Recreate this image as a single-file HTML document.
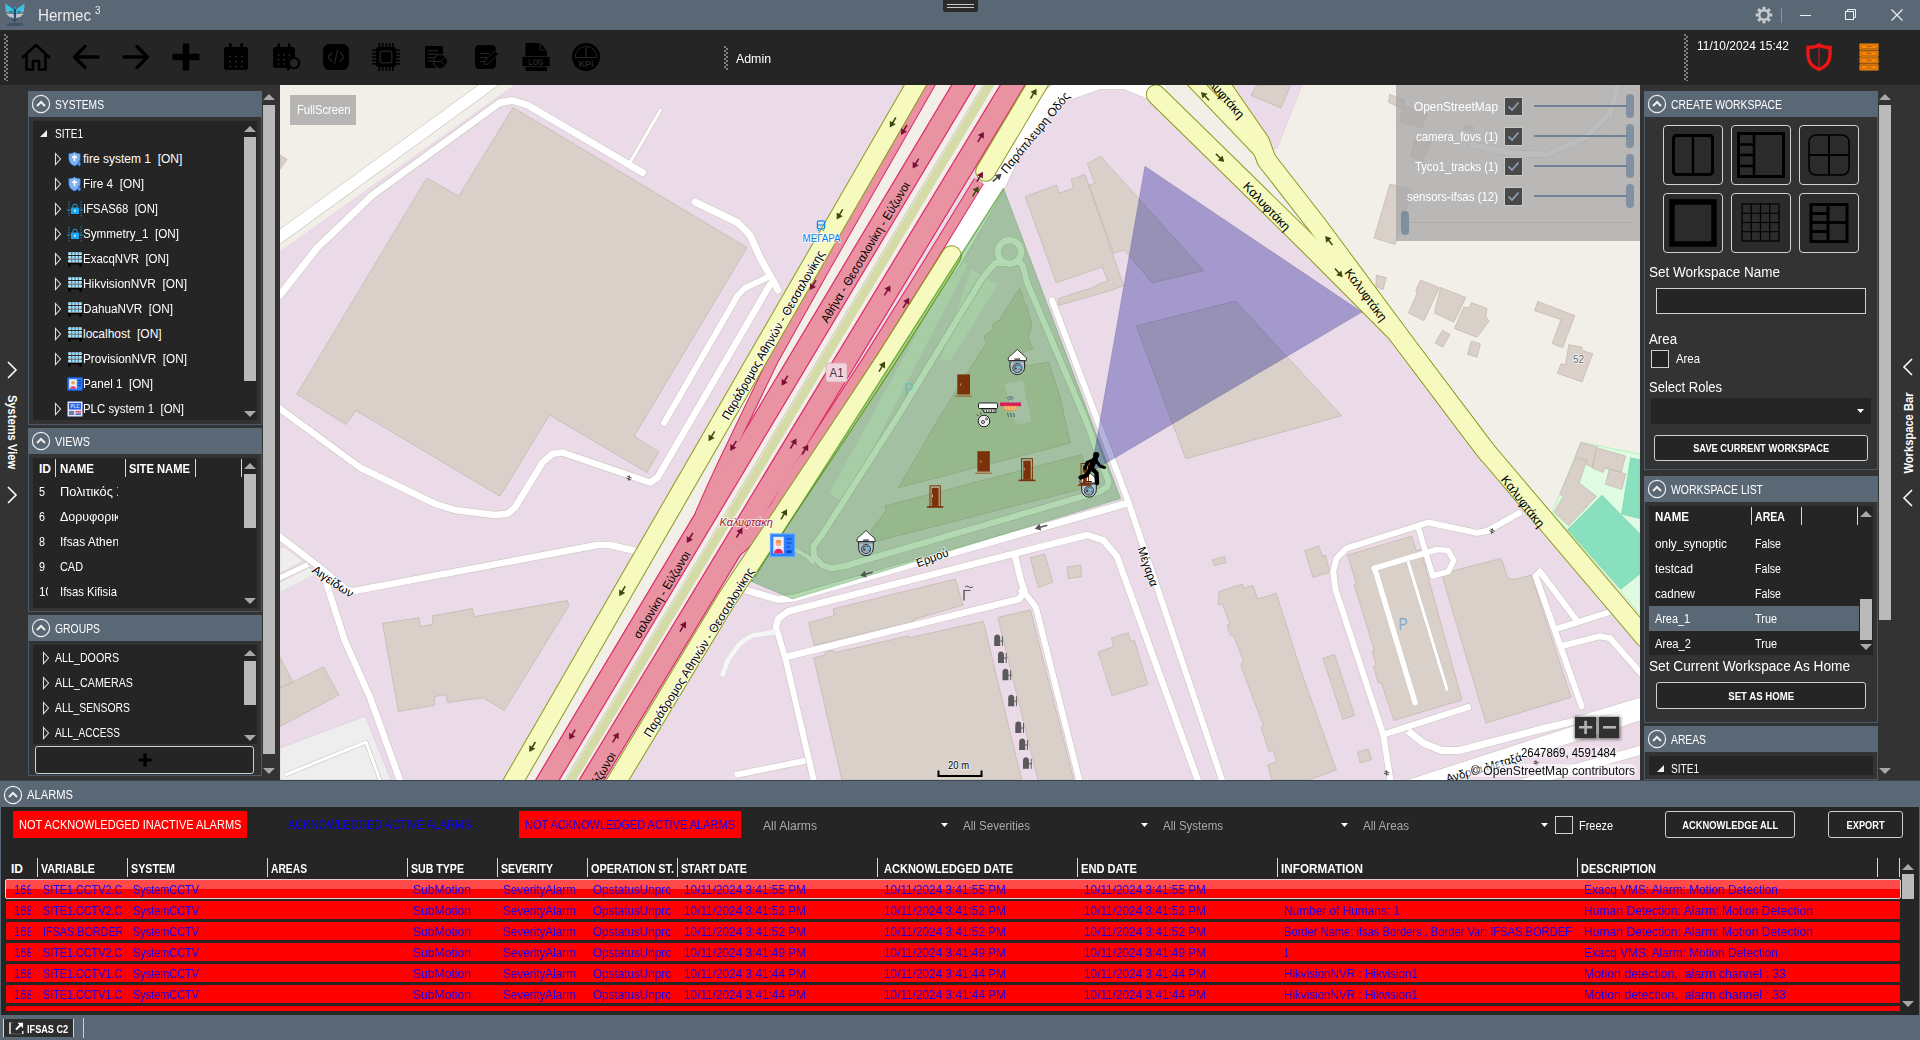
<!DOCTYPE html>
<html><head><meta charset="utf-8"><title>Hermec</title>
<style>
html,body{margin:0;padding:0;background:#333;}
body{width:1920px;height:1040px;position:relative;overflow:hidden;font-family:"Liberation Sans",sans-serif;}
.b{position:absolute;display:block;}
.t{position:absolute;white-space:pre;transform-origin:0 50%;display:block;}
svg{overflow:visible;}
svg.map{position:absolute;left:280px;top:85px;overflow:hidden;}
</style></head><body>
<div class="b" style="left:0px;top:0px;width:1920px;height:30px;background:#5a6775;"></div>
<svg class="b" style="left:3px;top:1px" width="24" height="27" viewBox="0 0 24 27"><defs><filter id="lb" x="-20%" y="-20%" width="140%" height="140%"><feGaussianBlur stdDeviation="0.45"/></filter></defs><g filter="url(#lb)"><path d="M2.200,2.500 L10,8 L11.200,12.500 L8,12 L3.500,9.500 Z" fill="#35c4e6"/><path d="M21.500,2.500 L13.800,8 L12.600,12.500 L16,12 L20.300,9.500 Z" fill="#35c4e6"/><path d="M2,3 L4,9.500 L8,12 L3,11 Z M21.800,3 L19.800,9.500 L16,12 L20.800,11 Z" fill="#9ec3d4" opacity="0.700"/><path d="M3,12.500 L10.500,13 L11,17 L6.500,16 Z M20.800,12.500 L13.300,13 L12.800,17 L17.300,16 Z" fill="#e2e8ee" opacity="0.750"/><path d="M11.200,4.500 L12.600,4.500 L13,12 L12.400,20.500 L11.400,20.500 L10.800,12 Z" fill="#2b4a62"/><path d="M11.300,5 L12.500,5 L12.300,8 L11.500,8 Z" fill="#3cc8e8"/><path d="M7.500,17 L11.500,21.500 L16.300,17 L12,19.300 Z" fill="#33485c" opacity="0.900"/><path d="M6.500,10.800 L9.500,11 M17.300,10.800 L14.300,11" stroke="#13405a" stroke-width="1"/></g><text x="12" y="25.200" font-size="4.200" text-anchor="middle" fill="#274660" font-family="Liberation Sans,sans-serif" font-weight="bold" textLength="16" lengthAdjust="spacingAndGlyphs">HERMES</text></svg>
<span class="t" style="left:38.0px;top:5.5px;font-size:16px;line-height:20px;color:#ececec;transform:scaleX(0.9463);">Hermec</span>
<span class="t" style="left:94.5px;top:4.0px;font-size:10px;line-height:14px;color:#ececec;transform:scaleX(0.9888);">3</span>
<div class="b" style="left:943px;top:0px;width:35px;height:12px;background:#2b2b2b;border-radius:0 0 2px 2px;"></div>
<div class="b" style="left:947px;top:4px;width:27px;height:1px;background:#c8c8c8;"></div>
<div class="b" style="left:947px;top:7px;width:27px;height:1px;background:#c8c8c8;"></div>
<svg class="b" style="left:1754px;top:5px" width="20" height="20" viewBox="-10 -10 20 20"><g fill="#c6cace"><rect x="-1.500" y="-8.300" width="3" height="16.600" transform="rotate(0)"/><rect x="-1.500" y="-8.300" width="3" height="16.600" transform="rotate(45)"/><rect x="-1.500" y="-8.300" width="3" height="16.600" transform="rotate(90)"/><rect x="-1.500" y="-8.300" width="3" height="16.600" transform="rotate(135)"/><circle r="5.900"/></g><circle r="3.500" fill="#5a6775"/></svg>
<div class="b" style="left:1781px;top:8px;width:1px;height:15px;background:#8a95a1;"></div>
<div class="b" style="left:1800px;top:15px;width:11px;height:1px;background:#eee;"></div>
<svg class="b" style="left:1845px;top:9px" width="12" height="12"><rect x="0.5" y="2.5" width="8" height="8" fill="none" stroke="#eee"/><polyline points="2.5,2.5 2.5,0.5 10.5,0.5 10.5,8.5 8.5,8.5" fill="none" stroke="#eee"/></svg>
<svg class="b" style="left:1891px;top:9px" width="12" height="12"><path d="M0.5,0.5 L11.5,11.5 M11.5,0.5 L0.5,11.5" stroke="#eee" stroke-width="1.2"/></svg>
<div class="b" style="left:0px;top:30px;width:1920px;height:55px;background:#252525;"></div>
<div class="b" style="left:4px;top:34px;width:4px;height:47px;background-image:radial-gradient(circle at 1px 1px,#808080 0.700px,transparent 0.950px),radial-gradient(circle at 3px 3px,#808080 0.700px,transparent 0.950px);background-size:4px 4px;"></div>
<div class="b" style="left:723.5px;top:46px;width:4px;height:24px;background-image:radial-gradient(circle at 1px 1px,#808080 0.700px,transparent 0.950px),radial-gradient(circle at 3px 3px,#808080 0.700px,transparent 0.950px);background-size:4px 4px;"></div>
<div class="b" style="left:1684px;top:34px;width:4px;height:47px;background-image:radial-gradient(circle at 1px 1px,#808080 0.700px,transparent 0.950px),radial-gradient(circle at 3px 3px,#808080 0.700px,transparent 0.950px);background-size:4px 4px;"></div>
<span class="t" style="left:736.0px;top:49.5px;font-size:13px;line-height:17px;color:#fff;transform:scaleX(0.9499);">Admin</span>
<span class="t" style="left:1697.0px;top:37.0px;font-size:13px;line-height:17px;color:#fff;transform:scaleX(0.9177);">11/10/2024 15:42</span>
<svg class="b" style="left:21px;top:42px" width="30" height="30" viewBox="0 0 30 30"><path d="M2,15 L15,3 L28,15 M5.5,13 V27.5 H12 V19 H18 V27.5 H24.5 V13" fill="none" stroke="#000" stroke-width="2.6" stroke-linejoin="round" stroke-linecap="round"/></svg>
<svg class="b" style="left:71px;top:42px" width="30" height="30" viewBox="0 0 30 30"><path d="M27,15 H4 M14,4.5 L3.5,15 L14,25.5" fill="none" stroke="#000" stroke-width="3.4" stroke-linecap="round" stroke-linejoin="round"/></svg>
<svg class="b" style="left:121px;top:42px" width="30" height="30" viewBox="0 0 30 30"><path d="M3,15 H26 M16,4.5 L26.5,15 L16,25.5" fill="none" stroke="#000" stroke-width="3.4" stroke-linecap="round" stroke-linejoin="round"/></svg>
<svg class="b" style="left:171px;top:42px" width="30" height="30" viewBox="0 0 30 30"><path d="M15,1.5 V28.5 M1.5,15 H28.5" stroke="#000" stroke-width="6.5"/></svg>
<svg class="b" style="left:222px;top:42px" width="28" height="30" viewBox="0 0 28 30"><rect x="2" y="5" width="24" height="23" rx="2.5" fill="#000"/><rect x="7" y="1" width="2.6" height="7" rx="1.3" fill="#000"/><rect x="18.4" y="1" width="2.6" height="7" rx="1.3" fill="#000"/><circle cx="8" cy="14.5" r="1.1" fill="#252525"/><circle cx="8" cy="19.5" r="1.1" fill="#252525"/><circle cx="8" cy="24.5" r="1.1" fill="#252525"/><circle cx="14" cy="14.5" r="1.1" fill="#252525"/><circle cx="14" cy="19.5" r="1.1" fill="#252525"/><circle cx="14" cy="24.5" r="1.1" fill="#252525"/><circle cx="20" cy="14.5" r="1.1" fill="#252525"/><circle cx="20" cy="19.5" r="1.1" fill="#252525"/><circle cx="20" cy="24.5" r="1.1" fill="#252525"/></svg>
<svg class="b" style="left:272px;top:42px" width="30" height="30" viewBox="0 0 30 30"><rect x="1" y="5" width="22" height="21" rx="2.5" fill="#000"/><rect x="5.5" y="1" width="2.4" height="7" rx="1.2" fill="#000"/><rect x="16" y="1" width="2.4" height="7" rx="1.2" fill="#000"/><circle cx="6.5" cy="13" r="1" fill="#252525"/><circle cx="6.5" cy="17.5" r="1" fill="#252525"/><circle cx="6.5" cy="22" r="1" fill="#252525"/><circle cx="12" cy="13" r="1" fill="#252525"/><circle cx="12" cy="17.5" r="1" fill="#252525"/><circle cx="12" cy="22" r="1" fill="#252525"/><circle cx="17.5" cy="13" r="1" fill="#252525"/><circle cx="17.5" cy="17.5" r="1" fill="#252525"/><circle cx="17.5" cy="22" r="1" fill="#252525"/><circle cx="22" cy="21" r="5.2" fill="#252525" stroke="#000" stroke-width="2"/><path d="M18,25 L15.5,28" stroke="#000" stroke-width="2.4"/></svg>
<svg class="b" style="left:323px;top:44px" width="26" height="26" viewBox="0 0 26 26"><rect width="26" height="26" rx="6.5" fill="#000"/><path d="M9,8.5 L5,13 L9,17.5 M17,8.5 L21,13 L17,17.5 M14.5,6 L11.5,20" fill="none" stroke="#252525" stroke-width="1.2"/></svg>
<svg class="b" style="left:372px;top:43px" width="28" height="28" viewBox="0 0 28 28"><rect x="6.5" y="0" width="1.6" height="28" fill="#000"/><rect x="0" y="6.5" width="28" height="1.6" fill="#000"/><rect x="9.9" y="0" width="1.6" height="28" fill="#000"/><rect x="0" y="9.9" width="28" height="1.6" fill="#000"/><rect x="13.3" y="0" width="1.6" height="28" fill="#000"/><rect x="0" y="13.3" width="28" height="1.6" fill="#000"/><rect x="16.7" y="0" width="1.6" height="28" fill="#000"/><rect x="0" y="16.7" width="28" height="1.6" fill="#000"/><rect x="20.1" y="0" width="1.6" height="28" fill="#000"/><rect x="0" y="20.1" width="28" height="1.6" fill="#000"/><rect x="4" y="4" width="20" height="20" rx="2.500" fill="#000"/><rect x="8.200" y="8.200" width="11.600" height="11.600" rx="1.500" fill="none" stroke="#252525" stroke-width="1.300"/></svg>
<svg class="b" style="left:424.5px;top:45.5px" width="23" height="23" viewBox="0 0 23 23"><rect x="0" y="0" width="18" height="22" rx="1.5" fill="#000"/><rect x="3" y="4" width="10" height="1.2" fill="#252525"/><rect x="3" y="7.5" width="10" height="1.2" fill="#252525"/><rect x="3" y="11" width="10" height="1.2" fill="#252525"/><rect x="3" y="14.5" width="10" height="1.2" fill="#252525"/><circle cx="15.5" cy="15.5" r="7" fill="#000" stroke="#252525" stroke-width="1.2"/><path d="M15.5,15.5 L21,11 M15.5,15.5 L21,20 M15.5,15.5 H8.5" stroke="#252525" stroke-width="1"/></svg>
<svg class="b" style="left:475px;top:45px" width="24" height="24" viewBox="0 0 24 24"><rect x="0" y="0" width="21" height="24" rx="4.5" fill="#000"/><rect x="5" y="8" width="9" height="1.1" fill="#252525"/><rect x="5" y="12" width="7.5" height="1.1" fill="#252525"/><rect x="5" y="16" width="6" height="1.1" fill="#252525"/><path d="M9,19.5 L10,15.5 L20,5.5 L23.5,9 L13.5,19 Z" fill="#000" stroke="#252525" stroke-width="1"/></svg>
<svg class="b" style="left:522px;top:43px" width="28" height="28" viewBox="0 0 28 28"><path d="M3.5,0 H18 L25,7 V28 H3.5 Z" fill="#000"/><path d="M18,0 V7 H25" fill="none" stroke="#252525" stroke-width="1"/><rect x="0" y="13.5" width="28" height="10" fill="#000" stroke="#252525" stroke-width="0.8"/><text x="14" y="22" font-family="Liberation Sans,sans-serif" font-weight="bold" font-size="8.5" text-anchor="middle" fill="#252525" textLength="15" lengthAdjust="spacingAndGlyphs">LOG</text></svg>
<svg class="b" style="left:572px;top:43px" width="28" height="28" viewBox="0 0 28 28"><circle cx="14" cy="14" r="14" fill="#000"/><path d="M3,14.5 A11,11 0 0 1 25,14.5 Z" fill="none" stroke="#252525" stroke-width="1"/><path d="M14,5 V14" stroke="#252525" stroke-width="1.3"/><text x="14" y="24.3" font-family="Liberation Sans,sans-serif" font-weight="bold" font-size="8.5" text-anchor="middle" fill="#252525" textLength="15" lengthAdjust="spacingAndGlyphs">KPI</text></svg>
<svg class="b" style="left:1806px;top:43px" width="26" height="28" viewBox="0 0 26 28"><path d="M13,2 C9,4.5 5,4.5 2,4.5 V12 C2,19.5 7,24 13,26.5 C19,24 24,19.5 24,12 V4.5 C21,4.5 17,4.5 13,2 Z" fill="none" stroke="#f01414" stroke-width="3.400"/><path d="M13,3 V25" stroke="#f01414" stroke-width="1"/></svg>
<svg class="b" style="left:1859px;top:43px" width="20" height="28" viewBox="0 0 20 28"><rect x="0.500" y="0.5" width="19" height="6.300" rx="0.800" fill="#ff8c0a"/><rect x="2" y="2" width="16" height="3.300" fill="none" stroke="#b35a00" stroke-width="0.800"/><rect x="7.500" y="3.1" width="5" height="1" fill="#b35a00"/><rect x="0.500" y="7.4" width="19" height="6.300" rx="0.800" fill="#ff8c0a"/><rect x="2" y="8.9" width="16" height="3.300" fill="none" stroke="#b35a00" stroke-width="0.800"/><rect x="7.500" y="10" width="5" height="1" fill="#b35a00"/><rect x="0.500" y="14.3" width="19" height="6.300" rx="0.800" fill="#ff8c0a"/><rect x="2" y="15.8" width="16" height="3.300" fill="none" stroke="#b35a00" stroke-width="0.800"/><rect x="7.500" y="16.9" width="5" height="1" fill="#b35a00"/><rect x="0.500" y="21.2" width="19" height="6.300" rx="0.800" fill="#ff8c0a"/><rect x="2" y="22.7" width="16" height="3.300" fill="none" stroke="#b35a00" stroke-width="0.800"/><rect x="7.500" y="23.8" width="5" height="1" fill="#b35a00"/></svg>
<div class="b" style="left:0px;top:85px;width:280px;height:695px;background:#333333;"></div>
<div class="b" style="left:1640px;top:85px;width:280px;height:695px;background:#333333;"></div>
<svg class="map" width="1360" height="695" viewBox="280 85 1360 695"><rect x="280" y="85" width="1360" height="695" fill="#ebdbe8"/>
<polygon points="280.0,85.0 514.0,85.0 280.0,251.0" fill="#f2efe9" />
<polygon points="1150.0,85.0 1158.0,100.0 1312.0,234.0 1470.0,430.0 1640.0,632.0 1640.0,85.0" fill="#f2efe9" />
<polygon points="1228.0,85.0 1302.0,85.0 1277.0,148.5 1268.0,150.0" fill="#ebdbe8" stroke="#dccbd9" stroke-width="0.6" />
<polygon points="525.9,780.0 604.6,780.0 1027.0,85.0 927.0,85.0" fill="#f2efe9" />
<polygon points="280.0,748.0 365.4,715.9 391.0,780.0 280.0,780.0" fill="#eeeeee" stroke="#d9c8d6" stroke-width="0.6" />
<polygon points="280.0,547.7 284.6,547.1 302.5,561.0 280.0,573.0" fill="#eeeeee" stroke="#e0cdd8" stroke-width="0.5" />
<polygon points="280.0,582.3 308.8,567.3 315.8,574.2 280.0,592.7" fill="#eeeeee" stroke="#e0cdd8" stroke-width="0.5" />
<polygon points="1552.2,513.0 1581.0,442.2 1640.0,454.3 1640.0,613.6" fill="#dffce2" stroke="#a8efb4" stroke-width="0.8" />
<polygon points="1567.7,529.6 1602.0,495.3 1640.0,534.0 1640.0,573.8 1620.8,589.3" fill="#88e0be" stroke="#7ccfae" stroke-width="0.7" />
<polygon points="1630.8,457.7 1640.0,459.9 1640.0,518.5 1621.5,514.0" fill="#88e0be" stroke="#7ccfae" stroke-width="0.7" />
<polygon points="513.0,107.5 747.0,247.5 634.2,436.2 658.8,452.0 646.8,472.5 549.5,415.0 500.0,496.2 355.8,410.5 346.2,424.5 296.8,394.2 426.8,178.0 458.8,196.2" fill="#d9d0c9" stroke="#c3b5a9" stroke-width="0.7" />
<polygon points="280.0,155.0 287.0,159.5 280.0,169.0" fill="#d9d0c9" stroke="#c3b5a9" stroke-width="0.7" />
<polygon points="382.5,623.4 418.8,617.7 420.3,626.8 433.3,624.1 432.0,616.0 472.2,608.5 474.3,616.6 567.2,600.6 568.7,605.9 504.2,710.5 482.9,697.7 447.6,702.6 446.1,694.5 434.2,696.7 434.8,705.2 398.5,711.6" fill="#d9d0c9" stroke="#c3b5a9" stroke-width="0.7" />
<polygon points="280.0,688.1 323.8,666.8 338.7,695.0 280.0,726.6" fill="#d9d0c9" stroke="#c3b5a9" stroke-width="0.7" />
<polygon points="280.0,657.2 292.8,681.7 280.0,688.0" fill="#d9d0c9" stroke="#c3b5a9" stroke-width="0.7" />
<polygon points="1025.2,196.6 1056.6,185.1 1059.0,193.3 1073.4,188.1 1071.3,179.4 1084.9,174.5 1123.6,285.7 1113.0,289.8 1059.0,305.3 1057.9,298.8 1095.8,286.5 1096.6,284.9 1107.8,280.8 1102.4,266.9 1056.3,282.7" fill="#d9d0c9" stroke="#c3b5a9" stroke-width="0.7" />
<polygon points="1087.2,163.9 1100.4,156.2 1203.7,270.5 1152.2,282.9 1124.4,250.0 1113.8,253.3 1088.8,185.1 1095.0,183.2" fill="#d9d0c9" stroke="#c3b5a9" stroke-width="0.7" />
<polygon points="1136.3,326.1 1235.4,301.1 1341.6,415.7 1185.7,458.8" fill="#d9d0c9" stroke="#c3b5a9" stroke-width="0.7" />
<polygon points="1251.0,95.4 1281.0,108.0 1290.6,85.0 1257.0,85.0" fill="#d9d0c9" stroke="#c3b5a9" stroke-width="0.7" />
<polygon points="1390.0,184.0 1374.0,238.0 1395.0,244.5 1412.0,190.0" fill="#d9d0c9" stroke="#c3b5a9" stroke-width="0.7" />
<polygon points="1376.3,275.3 1386.3,277.5 1383.0,289.7 1375.9,286.4" fill="#d9d0c9" stroke="#c3b5a9" stroke-width="0.7" />
<polygon points="1389.5,94.5 1404.6,100.0 1403.8,106.4 1427.6,113.6 1422.0,127.8 1399.8,121.5 1403.0,108.8 1388.7,102.4" fill="#d9d0c9" stroke="#c3b5a9" stroke-width="0.7" />
<polygon points="1415.7,137.3 1430.8,142.1 1422.8,161.1 1410.1,156.4" fill="#d9d0c9" stroke="#c3b5a9" stroke-width="0.7" />
<polygon points="1465.7,124.7 1473.6,127.0 1472.0,131.0 1464.0,129.4" fill="#d9d0c9" stroke="#c3b5a9" stroke-width="0.7" />
<polygon points="1420.6,280.2 1439.4,287.5 1423.9,320.7 1408.4,312.9 1417.3,293.0 1415.7,290.4" fill="#d9d0c9" stroke="#c3b5a9" stroke-width="0.7" />
<polygon points="1440.5,287.5 1465.9,297.4 1453.8,322.2 1434.3,312.9" fill="#d9d0c9" stroke="#c3b5a9" stroke-width="0.7" />
<polygon points="1471.5,302.5 1487.0,308.5 1485.8,317.3 1489.2,320.7 1477.0,337.3 1454.4,328.4 1463.7,307.4 1469.2,307.4" fill="#d9d0c9" stroke="#c3b5a9" stroke-width="0.7" />
<polygon points="1442.7,330.2 1450.0,334.6 1442.7,347.2 1435.0,342.8" fill="#d9d0c9" stroke="#c3b5a9" stroke-width="0.7" />
<polygon points="1471.5,341.0 1480.3,343.9 1477.0,357.2 1467.5,354.3" fill="#d9d0c9" stroke="#c3b5a9" stroke-width="0.7" />
<polygon points="1537.8,301.4 1574.8,315.6 1562.6,347.7 1552.2,343.5 1561.0,319.6 1534.5,310.7" fill="#d9d0c9" stroke="#c3b5a9" stroke-width="0.7" />
<polygon points="1568.8,344.6 1582.0,347.2 1582.0,350.5 1592.7,353.8 1582.0,381.9 1557.3,373.3 1561.0,363.8 1565.5,364.9" fill="#d9d0c9" stroke="#c3b5a9" stroke-width="0.7" />
<polygon points="1581.0,442.2 1597.6,447.3 1592.0,467.2 1584.3,463.2 1586.5,459.9 1575.4,456.5" fill="#d9d0c9" stroke="#c3b5a9" stroke-width="0.7" />
<polygon points="1596.5,447.7 1625.7,456.1 1621.2,472.0 1604.9,468.1 1603.1,472.5 1592.5,468.1" fill="#d9d0c9" stroke="#c3b5a9" stroke-width="0.7" />
<polygon points="1609.3,469.4 1625.7,473.8 1621.9,489.3 1605.3,484.2" fill="#d9d0c9" stroke="#c3b5a9" stroke-width="0.7" />
<polygon points="1575.4,457.7 1586.5,461.0 1579.2,483.1 1596.5,496.4 1568.8,525.6 1554.0,512.3 1563.3,496.4 1560.0,494.2 1565.5,480.9" fill="#d9d0c9" stroke="#c3b5a9" stroke-width="0.7" />
<polygon points="1347.6,555.0 1411.7,536.2 1416.2,550.6 1420.6,549.5 1462.0,700.0 1393.9,720.4 1381.5,683.2 1378.0,682.3 1373.5,666.4 1376.1,665.5 1372.3,651.4 1374.4,650.5 1354.2,584.9 1356.4,583.8" fill="#d9d0c9" stroke="#c3b5a9" stroke-width="0.7" />
<polygon points="1441.6,573.8 1501.3,558.3 1508.0,578.7 1515.7,579.3 1531.2,574.9 1571.0,697.4 1486.0,723.0" fill="#d9d0c9" stroke="#c3b5a9" stroke-width="0.7" />
<polygon points="1304.9,550.6 1318.9,545.8 1322.1,556.0 1325.6,555.2 1329.6,572.2 1313.0,577.5" fill="#d9d0c9" stroke="#c3b5a9" stroke-width="0.7" />
<polygon points="1322.9,658.3 1334.5,654.3 1354.7,715.4 1343.1,719.4" fill="#d9d0c9" stroke="#c3b5a9" stroke-width="0.7" />
<polygon points="1300.0,668.0 1336.3,770.0 1308.9,780.0 1283.0,780.0 1271.7,780.0 1267.7,765.2 1277.1,761.2 1273.1,750.4 1269.0,751.7 1261.0,727.5 1263.7,726.2 1244.8,676.4 1240.8,664.2 1243.5,661.6 1234.0,636.0 1230.0,634.6 1227.3,625.2 1230.0,623.9 1222.0,603.7 1217.9,605.0 1219.2,591.5 1242.1,584.0 1243.5,588.3 1252.9,585.6 1257.5,599.1 1276.3,593.4" fill="#d9d0c9" stroke="#c3b5a9" stroke-width="0.7" />
<polygon points="1357.6,752.3 1368.2,749.1 1371.7,759.4 1360.2,762.9" fill="#d9d0c9" stroke="#c3b5a9" stroke-width="0.7" />
<polygon points="1212.5,559.8 1224.6,556.5 1226.0,562.5 1213.9,565.4" fill="#d9d0c9" stroke="#c3b5a9" stroke-width="0.7" />
<polygon points="1030.2,557.9 1044.8,553.9 1052.8,582.1 1038.3,587.5" fill="#d9d0c9" stroke="#c3b5a9" stroke-width="0.7" />
<polygon points="1067.1,566.8 1080.6,565.2 1081.4,576.7 1068.5,578.6" fill="#d9d0c9" stroke="#c3b5a9" stroke-width="0.7" />
<polygon points="1098.1,652.1 1113.4,646.7 1111.5,637.9 1128.2,632.7 1130.4,641.4 1134.4,640.5 1147.9,684.4 1112.1,695.7" fill="#d9d0c9" stroke="#c3b5a9" stroke-width="0.7" />
<polygon points="808.7,622.7 834.2,615.6 833.3,608.8 955.4,579.0 963.0,605.0 914.0,619.4 914.0,621.3 814.0,645.4" fill="#d9d0c9" stroke="#c3b5a9" stroke-width="0.7" />
<polygon points="813.7,657.9 824.6,655.0 825.6,652.1 833.3,650.2 834.2,652.7 908.8,635.8 909.2,637.7 983.3,621.3 1021.7,780.0 842.0,780.0" fill="#d9d0c9" stroke="#c3b5a9" stroke-width="0.7" />
<polygon points="997.7,617.5 1030.4,609.8 1073.7,780.0 1038.0,780.0" fill="#d9d0c9" stroke="#c3b5a9" stroke-width="0.7" />
<polygon points="1020.0,288.5 1025.4,304.9 1027.6,305.8 1028.7,314.0 1031.8,325.0 1028.2,337.8 1032.7,348.8 1022.7,352.4 1025.4,366.1 1048.5,362.1 1060.0,396.7 1070.2,443.0 898.4,487.7 937.7,420.0 986.1,343.3 984.3,336.0 993.5,329.6 992.5,325.0 996.2,321.4 999.9,320.5 1001.7,315.9" fill="#d9d0c9" stroke="#c3b5a9" stroke-width="0.7" />
<polygon points="884.7,506.0 1081.2,454.8 1083.0,458.0 1085.7,487.7 874.7,541.6 871.0,530.0 886.5,510.6" fill="#d9d0c9" stroke="#c3b5a9" stroke-width="0.7" />
<polygon points="958.0,258.0 968.0,264.0 844.4,503.6 829.3,493.5" fill="#eeeeee" />
<polygon points="1004.3,384.1 1022.8,380.8 1031.2,421.2 1016.1,424.5" fill="#ebdbe8" />
<polygon points="970.6,269.3 998.0,284.8 949.6,361.6 941.4,357.9" fill="#eeeeee" />
<polyline points="495.5,80.0 270.0,244.0" fill="none" stroke="#cfcac6" stroke-width="12.9" stroke-linecap="butt" stroke-linejoin="round" />
<polyline points="280.0,295.0 317.5,247.5 372.5,195.0 500.0,102.5 512.5,100.5 527.5,105.0 642.5,172.5" fill="none" stroke="#cfcac6" stroke-width="8.4" stroke-linecap="round" stroke-linejoin="round" />
<polyline points="630.0,162.5 660.5,110.0" fill="none" stroke="#cfcac6" stroke-width="4.4" stroke-linecap="round" stroke-linejoin="round" />
<polyline points="695.0,202.0 737.5,222.5 750.0,235.0 760.0,257.5 778.0,290.0" fill="none" stroke="#cfcac6" stroke-width="8.4" stroke-linecap="round" stroke-linejoin="round" />
<polyline points="766.0,278.0 745.0,288.0 738.0,295.0 664.0,423.0" fill="none" stroke="#cfcac6" stroke-width="7.4" stroke-linecap="round" stroke-linejoin="round" />
<polyline points="771.0,283.0 657.5,477.5 650.0,482.5 562.5,452.5 552.5,453.8 542.5,462.5 515.0,507.5 507.5,513.8 495.0,515.0 455.0,510.0 435.0,503.8 360.0,467.5 275.0,405.0" fill="none" stroke="#cfcac6" stroke-width="7.9" stroke-linecap="butt" stroke-linejoin="round" />
<polyline points="640.0,552.0 610.0,545.0 597.5,545.0 352.5,591.2 347.0,590.0 318.0,566.0 275.0,533.0" fill="none" stroke="#cfcac6" stroke-width="7.9" stroke-linecap="butt" stroke-linejoin="round" />
<polyline points="324.0,576.0 344.6,640.0 369.7,696.7 402.0,786.0" fill="none" stroke="#cfcac6" stroke-width="7.9" stroke-linecap="butt" stroke-linejoin="round" />
<polyline points="275.0,580.0 308.0,564.5" fill="none" stroke="#cfcac6" stroke-width="6.4" stroke-linecap="butt" stroke-linejoin="round" />
<polyline points="285.0,775.0 366.0,742.0 380.0,780.0" fill="none" stroke="#cfcac6" stroke-width="4.4" stroke-linecap="butt" stroke-linejoin="round" />
<polyline points="1052.0,300.4 1127.7,500.0 1222.0,780.0 1226.0,790.0" fill="none" stroke="#cfcac6" stroke-width="7.4" stroke-linecap="round" stroke-linejoin="round" />
<polyline points="1003.0,263.0 995.0,263.0 981.6,279.3 895.7,420.0 822.0,535.0 813.5,546.0 814.0,556.3 822.0,565.0 831.0,568.3 845.0,566.0 1100.2,491.3 1107.0,487.0 1108.6,481.7 1085.7,420.0 1027.3,283.0 1022.5,264.7 1017.0,261.0" fill="none" stroke="#cfcac6" stroke-width="7.4" stroke-linecap="round" stroke-linejoin="round" />
<circle cx="1009.5" cy="252" r="11.700" fill="none" stroke="#cfcac6" stroke-width="7.600"/>
<polyline points="790.0,547.0 806.9,556.3 814.1,563.0" fill="none" stroke="#cfcac6" stroke-width="5.4" stroke-linecap="butt" stroke-linejoin="round" />
<polyline points="745.6,590.0 778.0,599.5 792.5,598.3 1126.6,503.4" fill="none" stroke="#cfcac6" stroke-width="8.4" stroke-linecap="butt" stroke-linejoin="round" />
<polyline points="775.7,628.4 778.0,618.8 787.7,611.5 1087.3,535.0 1103.5,540.4 1117.0,556.5 1197.7,780.0 1201.0,790.0" fill="none" stroke="#cfcac6" stroke-width="7.9" stroke-linecap="butt" stroke-linejoin="round" />
<polyline points="775.7,626.0 786.0,660.8 816.0,790.0" fill="none" stroke="#cfcac6" stroke-width="7.4" stroke-linecap="butt" stroke-linejoin="round" />
<polyline points="786.0,657.0 1018.8,599.2 1024.6,591.5 1020.8,580.0 1014.8,555.0" fill="none" stroke="#cfcac6" stroke-width="7.9" stroke-linecap="butt" stroke-linejoin="round" />
<polyline points="1020.0,588.9 1028.0,597.0 1036.0,607.7 1079.2,780.0 1082.0,790.0" fill="none" stroke="#cfcac6" stroke-width="7.4" stroke-linecap="butt" stroke-linejoin="round" />
<polyline points="735.0,775.0 805.4,760.8" fill="none" stroke="#cfcac6" stroke-width="7.4" stroke-linecap="butt" stroke-linejoin="round" />
<polyline points="774.6,632.0 751.5,635.8 740.0,643.5 728.0,660.0 722.7,674.4" fill="none" stroke="#ddd" stroke-width="6" stroke-linecap="round" stroke-linejoin="round" />
<polyline points="1521.2,511.9 1488.0,530.7 1477.0,532.9 1428.3,522.5 1346.5,548.4 1336.5,558.3 1333.2,571.6 1335.4,589.3 1383.2,734.6 1392.0,790.0" fill="none" stroke="#cfcac6" stroke-width="7.4" stroke-linecap="butt" stroke-linejoin="round" />
<polyline points="1418.4,528.0 1432.7,576.0 1448.2,571.6 1453.8,560.5 1448.2,550.6 1437.2,549.5 1374.1,568.3 1376.3,573.8 1415.1,702.7" fill="none" stroke="#cfcac6" stroke-width="6.9" stroke-linecap="round" stroke-linejoin="round" />
<polyline points="1408.4,562.7 1447.0,689.4" fill="none" stroke="#cfcac6" stroke-width="4.4" stroke-linecap="round" stroke-linejoin="round" />
<polyline points="1383.2,734.6 1468.2,707.1" fill="none" stroke="#cfcac6" stroke-width="7.4" stroke-linecap="round" stroke-linejoin="round" />
<polyline points="1408.0,731.0 1424.0,743.4 1441.7,750.5 1459.4,750.5 1547.9,727.5 1571.0,722.2 1645.0,700.0" fill="none" stroke="#cfcac6" stroke-width="8.4" stroke-linecap="butt" stroke-linejoin="round" />
<polyline points="1540.0,571.6 1535.6,576.0 1581.6,706.3" fill="none" stroke="#cfcac6" stroke-width="7.4" stroke-linecap="round" stroke-linejoin="round" />
<polyline points="1540.0,571.6 1576.5,620.3" fill="none" stroke="#cfcac6" stroke-width="7.4" stroke-linecap="round" stroke-linejoin="round" />
<polyline points="1555.9,629.2 1610.0,612.0" fill="none" stroke="#cfcac6" stroke-width="7.4" stroke-linecap="butt" stroke-linejoin="round" />
<polyline points="1562.0,646.0 1599.3,636.3 1609.9,638.1 1645.0,678.0" fill="none" stroke="#cfcac6" stroke-width="7.4" stroke-linecap="butt" stroke-linejoin="round" />
<polyline points="1395.0,792.0 1645.0,711.0" fill="none" stroke="#cfcac6" stroke-width="16.4" stroke-linecap="butt" stroke-linejoin="round" />
<polyline points="1521.0,784.0 1645.0,749.0" fill="none" stroke="#cfcac6" stroke-width="10.4" stroke-linecap="butt" stroke-linejoin="round" />
<polyline points="1472.0,145.0 1510.0,153.0 1546.7,154.8 1586.0,137.0 1610.0,113.6 1620.0,80.0" fill="none" stroke="#cfcac6" stroke-width="7.4" stroke-linecap="round" stroke-linejoin="round" />
<polyline points="1608.5,113.6 1645.0,190.0" fill="none" stroke="#cfcac6" stroke-width="3.4" stroke-linecap="butt" stroke-linejoin="round" />
<polyline points="945.5,268.0 950.5,259.5 993.8,185.0 1016.2,138.8 1037.0,112.0 1062.2,90.8 1097.4,78.3 1126.0,78.0 1152.4,88.7 1160.0,95.0" fill="none" stroke="#cfcac6" stroke-width="23.4" stroke-linecap="butt" stroke-linejoin="round" />
<polyline points="495.5,80.0 270.0,244.0" fill="none" stroke="#ffffff" stroke-width="11.5" stroke-linecap="butt" stroke-linejoin="round" />
<polyline points="280.0,295.0 317.5,247.5 372.5,195.0 500.0,102.5 512.5,100.5 527.5,105.0 642.5,172.5" fill="none" stroke="#ffffff" stroke-width="7" stroke-linecap="round" stroke-linejoin="round" />
<polyline points="630.0,162.5 660.5,110.0" fill="none" stroke="#ffffff" stroke-width="3" stroke-linecap="round" stroke-linejoin="round" />
<polyline points="695.0,202.0 737.5,222.5 750.0,235.0 760.0,257.5 778.0,290.0" fill="none" stroke="#ffffff" stroke-width="7" stroke-linecap="round" stroke-linejoin="round" />
<polyline points="766.0,278.0 745.0,288.0 738.0,295.0 664.0,423.0" fill="none" stroke="#ffffff" stroke-width="6" stroke-linecap="round" stroke-linejoin="round" />
<polyline points="771.0,283.0 657.5,477.5 650.0,482.5 562.5,452.5 552.5,453.8 542.5,462.5 515.0,507.5 507.5,513.8 495.0,515.0 455.0,510.0 435.0,503.8 360.0,467.5 275.0,405.0" fill="none" stroke="#ffffff" stroke-width="6.5" stroke-linecap="butt" stroke-linejoin="round" />
<polyline points="640.0,552.0 610.0,545.0 597.5,545.0 352.5,591.2 347.0,590.0 318.0,566.0 275.0,533.0" fill="none" stroke="#ffffff" stroke-width="6.5" stroke-linecap="butt" stroke-linejoin="round" />
<polyline points="324.0,576.0 344.6,640.0 369.7,696.7 402.0,786.0" fill="none" stroke="#ffffff" stroke-width="6.5" stroke-linecap="butt" stroke-linejoin="round" />
<polyline points="275.0,580.0 308.0,564.5" fill="none" stroke="#ffffff" stroke-width="5" stroke-linecap="butt" stroke-linejoin="round" />
<polyline points="285.0,775.0 366.0,742.0 380.0,780.0" fill="none" stroke="#ffffff" stroke-width="3" stroke-linecap="butt" stroke-linejoin="round" />
<polyline points="1052.0,300.4 1127.7,500.0 1222.0,780.0 1226.0,790.0" fill="none" stroke="#ffffff" stroke-width="6" stroke-linecap="round" stroke-linejoin="round" />
<polyline points="1003.0,263.0 995.0,263.0 981.6,279.3 895.7,420.0 822.0,535.0 813.5,546.0 814.0,556.3 822.0,565.0 831.0,568.3 845.0,566.0 1100.2,491.3 1107.0,487.0 1108.6,481.7 1085.7,420.0 1027.3,283.0 1022.5,264.7 1017.0,261.0" fill="none" stroke="#ffffff" stroke-width="6" stroke-linecap="round" stroke-linejoin="round" />
<circle cx="1009.5" cy="252" r="11.700" fill="none" stroke="#fff" stroke-width="6.400"/>
<polyline points="790.0,547.0 806.9,556.3 814.1,563.0" fill="none" stroke="#ffffff" stroke-width="4" stroke-linecap="butt" stroke-linejoin="round" />
<polyline points="745.6,590.0 778.0,599.5 792.5,598.3 1126.6,503.4" fill="none" stroke="#ffffff" stroke-width="7" stroke-linecap="butt" stroke-linejoin="round" />
<polyline points="775.7,628.4 778.0,618.8 787.7,611.5 1087.3,535.0 1103.5,540.4 1117.0,556.5 1197.7,780.0 1201.0,790.0" fill="none" stroke="#ffffff" stroke-width="6.5" stroke-linecap="butt" stroke-linejoin="round" />
<polyline points="775.7,626.0 786.0,660.8 816.0,790.0" fill="none" stroke="#ffffff" stroke-width="6" stroke-linecap="butt" stroke-linejoin="round" />
<polyline points="786.0,657.0 1018.8,599.2 1024.6,591.5 1020.8,580.0 1014.8,555.0" fill="none" stroke="#ffffff" stroke-width="6.5" stroke-linecap="butt" stroke-linejoin="round" />
<polyline points="1020.0,588.9 1028.0,597.0 1036.0,607.7 1079.2,780.0 1082.0,790.0" fill="none" stroke="#ffffff" stroke-width="6" stroke-linecap="butt" stroke-linejoin="round" />
<polyline points="735.0,775.0 805.4,760.8" fill="none" stroke="#ffffff" stroke-width="6" stroke-linecap="butt" stroke-linejoin="round" />
<polyline points="774.6,632.0 751.5,635.8 740.0,643.5 728.0,660.0 722.7,674.4" fill="none" stroke="#f6f6f6" stroke-width="4.6" stroke-linecap="round" stroke-linejoin="round" />
<polyline points="1521.2,511.9 1488.0,530.7 1477.0,532.9 1428.3,522.5 1346.5,548.4 1336.5,558.3 1333.2,571.6 1335.4,589.3 1383.2,734.6 1392.0,790.0" fill="none" stroke="#ffffff" stroke-width="6" stroke-linecap="butt" stroke-linejoin="round" />
<polyline points="1418.4,528.0 1432.7,576.0 1448.2,571.6 1453.8,560.5 1448.2,550.6 1437.2,549.5 1374.1,568.3 1376.3,573.8 1415.1,702.7" fill="none" stroke="#ffffff" stroke-width="5.5" stroke-linecap="round" stroke-linejoin="round" />
<polyline points="1408.4,562.7 1447.0,689.4" fill="none" stroke="#ffffff" stroke-width="3" stroke-linecap="round" stroke-linejoin="round" />
<polyline points="1383.2,734.6 1468.2,707.1" fill="none" stroke="#ffffff" stroke-width="6" stroke-linecap="round" stroke-linejoin="round" />
<polyline points="1408.0,731.0 1424.0,743.4 1441.7,750.5 1459.4,750.5 1547.9,727.5 1571.0,722.2 1645.0,700.0" fill="none" stroke="#ffffff" stroke-width="7" stroke-linecap="butt" stroke-linejoin="round" />
<polyline points="1540.0,571.6 1535.6,576.0 1581.6,706.3" fill="none" stroke="#ffffff" stroke-width="6" stroke-linecap="round" stroke-linejoin="round" />
<polyline points="1540.0,571.6 1576.5,620.3" fill="none" stroke="#ffffff" stroke-width="6" stroke-linecap="round" stroke-linejoin="round" />
<polyline points="1555.9,629.2 1610.0,612.0" fill="none" stroke="#ffffff" stroke-width="6" stroke-linecap="butt" stroke-linejoin="round" />
<polyline points="1562.0,646.0 1599.3,636.3 1609.9,638.1 1645.0,678.0" fill="none" stroke="#ffffff" stroke-width="6" stroke-linecap="butt" stroke-linejoin="round" />
<polyline points="1395.0,792.0 1645.0,711.0" fill="none" stroke="#ffffff" stroke-width="15" stroke-linecap="butt" stroke-linejoin="round" />
<polyline points="1521.0,784.0 1645.0,749.0" fill="none" stroke="#ffffff" stroke-width="9" stroke-linecap="butt" stroke-linejoin="round" />
<polyline points="1472.0,145.0 1510.0,153.0 1546.7,154.8 1586.0,137.0 1610.0,113.6 1620.0,80.0" fill="none" stroke="#ffffff" stroke-width="6" stroke-linecap="round" stroke-linejoin="round" />
<polyline points="1608.5,113.6 1645.0,190.0" fill="none" stroke="#ffffff" stroke-width="2" stroke-linecap="butt" stroke-linejoin="round" />
<polyline points="945.5,268.0 950.5,259.5 993.8,185.0 1016.2,138.8 1037.0,112.0 1062.2,90.8 1097.4,78.3 1126.0,78.0 1152.4,88.7 1160.0,95.0" fill="none" stroke="#ffffff" stroke-width="22" stroke-linecap="butt" stroke-linejoin="round" />
<polyline points="559.2,800.0 1004.6,60.0" fill="none" stroke="#d5dba6" stroke-width="8.5" stroke-linecap="butt" stroke-linejoin="round" />
<polyline points="552.9,800.0 998.3,60.0" fill="none" stroke="#b9b6ad" stroke-width="0.7" stroke-linecap="butt" stroke-linejoin="round" />
<polyline points="932.0,80.0 826.3,265.0 773.1,360.0 724.0,462.0 712.0,488.0 700.0,515.0" fill="none" stroke="#dc2a67" stroke-width="11.5" stroke-linecap="butt" stroke-linejoin="round" />
<polyline points="736.0,552.0 752.0,538.0 775.0,507.0 790.0,480.0 868.0,360.0 927.5,265.0 979.0,181.0" fill="none" stroke="#dc2a67" stroke-width="11.5" stroke-linecap="butt" stroke-linejoin="round" />
<polyline points="535.5,800.0 978.5,60.0" fill="none" stroke="#dc2a67" stroke-width="21.5" stroke-linecap="butt" stroke-linejoin="round" />
<polyline points="579.5,800.0 1027.9,60.0" fill="none" stroke="#dc2a67" stroke-width="22.5" stroke-linecap="butt" stroke-linejoin="round" />
<polyline points="932.0,80.0 826.3,265.0 773.1,360.0 724.0,462.0 712.0,488.0 700.0,515.0" fill="none" stroke="#e892a2" stroke-width="9.5" stroke-linecap="butt" stroke-linejoin="round" />
<polyline points="736.0,552.0 752.0,538.0 775.0,507.0 790.0,480.0 868.0,360.0 927.5,265.0 979.0,181.0" fill="none" stroke="#e892a2" stroke-width="9.5" stroke-linecap="butt" stroke-linejoin="round" />
<polyline points="535.5,800.0 978.5,60.0" fill="none" stroke="#e892a2" stroke-width="19.1" stroke-linecap="butt" stroke-linejoin="round" />
<polyline points="579.5,800.0 1027.9,60.0" fill="none" stroke="#e892a2" stroke-width="20.1" stroke-linecap="butt" stroke-linejoin="round" />
<polyline points="502.7,800.0 929.9,60.0" fill="none" stroke="#8b9a1e" stroke-width="20.3" stroke-linecap="butt" stroke-linejoin="round" />
<polyline points="605.5,800.0 617.6,780.0 726.2,600.0 792.8,500.0 839.5,430.0 885.6,360.0 945.7,265.0 951.5,255.5" fill="none" stroke="#8b9a1e" stroke-width="20.5" stroke-linecap="round" stroke-linejoin="round" />
<polyline points="985.5,171.5 1049.0,65.0" fill="none" stroke="#8b9a1e" stroke-width="20.5" stroke-linecap="round" stroke-linejoin="round" />
<polyline points="1155.9,94.5 1307.3,242.9 1396.7,332.9 1470.3,430.0 1485.3,450.0 1645.0,638.0" fill="none" stroke="#8b9a1e" stroke-width="20.3" stroke-linecap="round" stroke-linejoin="round" />
<polyline points="1180.0,67.0 1258.8,149.6 1266.5,160.0" fill="none" stroke="#8b9a1e" stroke-width="15" stroke-linecap="butt" stroke-linejoin="round" />
<polyline points="1207.9,65.8 1225.0,90.4 1259.1,139.6 1266.5,160.0" fill="none" stroke="#8b9a1e" stroke-width="19" stroke-linecap="butt" stroke-linejoin="round" />
<polyline points="1259.1,139.6 1266.5,160.0 1318.0,226.0 1407.0,346.0 1474.5,436.0 1490.0,456.0" fill="none" stroke="#8b9a1e" stroke-width="20.3" stroke-linecap="butt" stroke-linejoin="round" />
<polyline points="502.7,800.0 929.9,60.0" fill="none" stroke="#f7fabf" stroke-width="18.3" stroke-linecap="butt" stroke-linejoin="round" />
<polyline points="605.5,800.0 617.6,780.0 726.2,600.0 792.8,500.0 839.5,430.0 885.6,360.0 945.7,265.0 951.5,255.5" fill="none" stroke="#f7fabf" stroke-width="18.5" stroke-linecap="round" stroke-linejoin="round" />
<polyline points="985.5,171.5 1049.0,65.0" fill="none" stroke="#f7fabf" stroke-width="18.5" stroke-linecap="round" stroke-linejoin="round" />
<polyline points="1155.9,94.5 1307.3,242.9 1396.7,332.9 1470.3,430.0 1485.3,450.0 1645.0,638.0" fill="none" stroke="#f7fabf" stroke-width="18.3" stroke-linecap="round" stroke-linejoin="round" />
<polyline points="1180.0,67.0 1258.8,149.6 1266.5,160.0" fill="none" stroke="#f7fabf" stroke-width="13" stroke-linecap="butt" stroke-linejoin="round" />
<polyline points="1207.9,65.8 1225.0,90.4 1259.1,139.6 1266.5,160.0" fill="none" stroke="#f7fabf" stroke-width="17" stroke-linecap="butt" stroke-linejoin="round" />
<polyline points="1259.1,139.6 1266.5,160.0 1318.0,226.0 1407.0,346.0 1474.5,436.0 1490.0,456.0" fill="none" stroke="#f7fabf" stroke-width="18.3" stroke-linecap="butt" stroke-linejoin="round" /><polygon points="1003.6,188.4 1120.6,498.6 792.5,599.0 751.6,581.5" fill="rgba(0,128,0,0.3)" stroke="rgba(0,110,0,0.25)" stroke-width="0.8" />
<polygon points="1144.9,166.3 1362.0,312.1 1091.0,472.0" fill="rgba(0,0,139,0.3)" stroke="rgba(60,60,120,0.25)" stroke-width="0.8" />
<polyline points="751.6,581.5 1003.6,188.4" fill="none" stroke="rgba(70,150,30,0.600)" stroke-width="1.4" stroke-linecap="butt" stroke-linejoin="round" />
<g transform="translate(892.8,122.5) rotate(121.1) scale(1.300)"><path d="M-4.5,0 H2.5" fill="none" stroke="#3c4a10" stroke-width="1.2"/><path d="M0,-2.700 L4.5,0 L0,2.700 Z" fill="#3c4a10"/></g>
<g transform="translate(839.7,214.4) rotate(121.1) scale(1.300)"><path d="M-4.5,0 H2.5" fill="none" stroke="#3c4a10" stroke-width="1.2"/><path d="M0,-2.700 L4.5,0 L0,2.700 Z" fill="#3c4a10"/></g>
<g transform="translate(711.6,436.3) rotate(121.1) scale(1.300)"><path d="M-4.5,0 H2.5" fill="none" stroke="#3c4a10" stroke-width="1.2"/><path d="M0,-2.700 L4.5,0 L0,2.700 Z" fill="#3c4a10"/></g>
<g transform="translate(622.2,591.2) rotate(121.1) scale(1.300)"><path d="M-4.5,0 H2.5" fill="none" stroke="#3c4a10" stroke-width="1.2"/><path d="M0,-2.700 L4.5,0 L0,2.700 Z" fill="#3c4a10"/></g>
<g transform="translate(532.3,747.0) rotate(121.1) scale(1.300)"><path d="M-4.5,0 H2.5" fill="none" stroke="#3c4a10" stroke-width="1.2"/><path d="M0,-2.700 L4.5,0 L0,2.700 Z" fill="#3c4a10"/></g>
<g transform="translate(904.0,130.0) rotate(121.1) scale(1.300)"><path d="M-4.5,0 H2.5" fill="none" stroke="#7a1038" stroke-width="1.2"/><path d="M0,-2.700 L4.5,0 L0,2.700 Z" fill="#7a1038"/></g>
<g transform="translate(813.0,285.1) rotate(121.1) scale(1.300)"><path d="M-4.5,0 H2.5" fill="none" stroke="#7a1038" stroke-width="1.2"/><path d="M0,-2.700 L4.5,0 L0,2.700 Z" fill="#7a1038"/></g>
<g transform="translate(733.3,445.9) rotate(121.1) scale(1.300)"><path d="M-4.5,0 H2.5" fill="none" stroke="#7a1038" stroke-width="1.2"/><path d="M0,-2.700 L4.5,0 L0,2.700 Z" fill="#7a1038"/></g>
<g transform="translate(915.7,163.6) rotate(121.1) scale(1.300)"><path d="M-4.5,0 H2.5" fill="none" stroke="#7a1038" stroke-width="1.2"/><path d="M0,-2.700 L4.5,0 L0,2.700 Z" fill="#7a1038"/></g>
<g transform="translate(784.7,380.7) rotate(121.1) scale(1.300)"><path d="M-4.5,0 H2.5" fill="none" stroke="#7a1038" stroke-width="1.2"/><path d="M0,-2.700 L4.5,0 L0,2.700 Z" fill="#7a1038"/></g>
<g transform="translate(689.8,538.0) rotate(121.1) scale(1.300)"><path d="M-4.5,0 H2.5" fill="none" stroke="#7a1038" stroke-width="1.2"/><path d="M0,-2.700 L4.5,0 L0,2.700 Z" fill="#7a1038"/></g>
<g transform="translate(572.2,734.6) rotate(121.1) scale(1.300)"><path d="M-4.5,0 H2.5" fill="none" stroke="#7a1038" stroke-width="1.2"/><path d="M0,-2.700 L4.5,0 L0,2.700 Z" fill="#7a1038"/></g>
<g transform="translate(980.8,136.9) rotate(-58.9) scale(1.300)"><path d="M-4.5,0 H2.5" fill="none" stroke="#7a1038" stroke-width="1.2"/><path d="M0,-2.700 L4.5,0 L0,2.700 Z" fill="#7a1038"/></g>
<g transform="translate(887.4,290.4) rotate(-58.9) scale(1.300)"><path d="M-4.5,0 H2.5" fill="none" stroke="#7a1038" stroke-width="1.2"/><path d="M0,-2.700 L4.5,0 L0,2.700 Z" fill="#7a1038"/></g>
<g transform="translate(793.5,443.5) rotate(-58.9) scale(1.300)"><path d="M-4.5,0 H2.5" fill="none" stroke="#7a1038" stroke-width="1.2"/><path d="M0,-2.700 L4.5,0 L0,2.700 Z" fill="#7a1038"/></g>
<g transform="translate(739.4,532.7) rotate(-58.9) scale(1.300)"><path d="M-4.5,0 H2.5" fill="none" stroke="#7a1038" stroke-width="1.2"/><path d="M0,-2.700 L4.5,0 L0,2.700 Z" fill="#7a1038"/></g>
<g transform="translate(683.0,626.6) rotate(-58.9) scale(1.300)"><path d="M-4.5,0 H2.5" fill="none" stroke="#7a1038" stroke-width="1.2"/><path d="M0,-2.700 L4.5,0 L0,2.700 Z" fill="#7a1038"/></g>
<g transform="translate(615.7,737.4) rotate(-58.9) scale(1.300)"><path d="M-4.5,0 H2.5" fill="none" stroke="#7a1038" stroke-width="1.2"/><path d="M0,-2.700 L4.5,0 L0,2.700 Z" fill="#7a1038"/></g>
<g transform="translate(906.2,302.8) rotate(-58.9) scale(1.300)"><path d="M-4.5,0 H2.5" fill="none" stroke="#7a1038" stroke-width="1.2"/><path d="M0,-2.700 L4.5,0 L0,2.700 Z" fill="#7a1038"/></g>
<g transform="translate(805.2,449.5) rotate(-58.9) scale(1.300)"><path d="M-4.5,0 H2.5" fill="none" stroke="#7a1038" stroke-width="1.2"/><path d="M0,-2.700 L4.5,0 L0,2.700 Z" fill="#7a1038"/></g>
<g transform="translate(882.0,366.6) rotate(-58.9) scale(1.300)"><path d="M-4.5,0 H2.5" fill="none" stroke="#3c4a10" stroke-width="1.2"/><path d="M0,-2.700 L4.5,0 L0,2.700 Z" fill="#3c4a10"/></g>
<g transform="translate(784.0,514.3) rotate(-58.9) scale(1.300)"><path d="M-4.5,0 H2.5" fill="none" stroke="#3c4a10" stroke-width="1.2"/><path d="M0,-2.700 L4.5,0 L0,2.700 Z" fill="#3c4a10"/></g>
<g transform="translate(1033.5,93.7) rotate(-58.9) scale(1.300)"><path d="M-4.5,0 H2.5" fill="none" stroke="#3c4a10" stroke-width="1.2"/><path d="M0,-2.700 L4.5,0 L0,2.700 Z" fill="#3c4a10"/></g>
<g transform="translate(975.6,191.4) rotate(-58.9) scale(1.300)"><path d="M-4.5,0 H2.5" fill="none" stroke="#3c4a10" stroke-width="1.2"/><path d="M0,-2.700 L4.5,0 L0,2.700 Z" fill="#3c4a10"/></g>
<g transform="translate(979.9,176.7) rotate(-58.9) scale(1.300)"><path d="M-4.5,0 H2.5" fill="none" stroke="#7a1038" stroke-width="1.2"/><path d="M0,-2.700 L4.5,0 L0,2.700 Z" fill="#7a1038"/></g>
<g transform="translate(997.2,177.6) rotate(-40.9) scale(1.300)"><path d="M-4.5,0 H2.5" fill="none" stroke="#444" stroke-width="1.2"/><path d="M0,-2.700 L4.5,0 L0,2.700 Z" fill="#444"/></g>
<g transform="translate(1205.0,96.1) rotate(-133.8) scale(1.300)"><path d="M-4.5,0 H2.5" fill="none" stroke="#3c4a10" stroke-width="1.2"/><path d="M0,-2.700 L4.5,0 L0,2.700 Z" fill="#3c4a10"/></g>
<g transform="translate(1220.1,158.0) rotate(44.4) scale(1.300)"><path d="M-4.5,0 H2.5" fill="none" stroke="#3c4a10" stroke-width="1.2"/><path d="M0,-2.700 L4.5,0 L0,2.700 Z" fill="#3c4a10"/></g>
<g transform="translate(1328.8,240.5) rotate(-128.4) scale(1.300)"><path d="M-4.5,0 H2.5" fill="none" stroke="#3c4a10" stroke-width="1.2"/><path d="M0,-2.700 L4.5,0 L0,2.700 Z" fill="#3c4a10"/></g>
<g transform="translate(1338.8,272.8) rotate(48.0) scale(1.300)"><path d="M-4.5,0 H2.5" fill="none" stroke="#3c4a10" stroke-width="1.2"/><path d="M0,-2.700 L4.5,0 L0,2.700 Z" fill="#3c4a10"/></g>
<g transform="translate(1041.0,527.0) rotate(165.0) scale(1.300)"><path d="M-5,0 H3" fill="none" stroke="#555" stroke-width="1.2"/><path d="M0.5,-2.700 L5,0 L0.5,2.700 Z" fill="#555"/></g>
<g transform="translate(866.4,574.0) rotate(165.0) scale(1.300)"><path d="M-5,0 H3" fill="none" stroke="#555" stroke-width="1.2"/><path d="M0.5,-2.700 L5,0 L0.5,2.700 Z" fill="#555"/></g>
<text dy="0.35em" transform="translate(773.0,335.0) rotate(-60.0)" font-family="Liberation Sans,sans-serif" font-size="12" text-anchor="middle" textLength="193" lengthAdjust="spacingAndGlyphs" fill="#000" stroke="#fff" stroke-opacity="0.85" stroke-width="1.6" paint-order="stroke" >Παράδρομος Αθηνών - Θεσσαλονίκης</text>
<text dy="0.35em" transform="translate(865.3,252.3) rotate(-59.1)" font-family="Liberation Sans,sans-serif" font-size="12" text-anchor="middle" textLength="161.5" lengthAdjust="spacingAndGlyphs" fill="#000" >Αθήνα - Θεσσαλονίκη - Εύζωνοι</text>
<text dy="0.35em" transform="translate(698.8,652.2) rotate(-58.0)" font-family="Liberation Sans,sans-serif" font-size="12" text-anchor="middle" textLength="197" lengthAdjust="spacingAndGlyphs" fill="#000" stroke="#fff" stroke-opacity="0.85" stroke-width="1.6" paint-order="stroke" >Παράδρομος Αθηνών - Θεσσαλονίκης</text>
<text dy="0.35em" transform="translate(661.6,594.7) rotate(-59.1)" font-family="Liberation Sans,sans-serif" font-size="12" text-anchor="middle" textLength="99.3" lengthAdjust="spacingAndGlyphs" fill="#000" >σαλονίκη - Εύζωνοι</text>
<text dy="0.35em" transform="translate(601.5,772.0) rotate(-59.0)" font-family="Liberation Sans,sans-serif" font-size="12" text-anchor="middle" textLength="44" lengthAdjust="spacingAndGlyphs" fill="#000" >Εύζωνοι</text>
<text dy="0.35em" transform="translate(1035.3,132.6) rotate(-50.6)" font-family="Liberation Sans,sans-serif" font-size="12" text-anchor="middle" textLength="100.7" lengthAdjust="spacingAndGlyphs" fill="#000" stroke="#fff" stroke-opacity="0.85" stroke-width="1.6" paint-order="stroke" >Παράπλευρη Οδός</text>
<text dy="0.35em" transform="translate(1221.9,93.3) rotate(48.9)" font-family="Liberation Sans,sans-serif" font-size="12.5" text-anchor="middle" textLength="62" lengthAdjust="spacingAndGlyphs" fill="#000" >Καλυφτάκη</text>
<text dy="0.35em" transform="translate(1266.9,206.4) rotate(46.1)" font-family="Liberation Sans,sans-serif" font-size="12.5" text-anchor="middle" textLength="62" lengthAdjust="spacingAndGlyphs" fill="#000" >Καλυφτάκη</text>
<text dy="0.35em" transform="translate(1366.0,295.0) rotate(53.4)" font-family="Liberation Sans,sans-serif" font-size="12.5" text-anchor="middle" textLength="62" lengthAdjust="spacingAndGlyphs" fill="#000" >Καλυφτάκη</text>
<text dy="0.35em" transform="translate(1522.9,501.4) rotate(52.0)" font-family="Liberation Sans,sans-serif" font-size="12.5" text-anchor="middle" textLength="62" lengthAdjust="spacingAndGlyphs" fill="#000" >Καλυφτάκη</text>
<text dy="0.35em" transform="translate(1147.9,566.6) rotate(71.0)" font-family="Liberation Sans,sans-serif" font-size="12" text-anchor="middle" textLength="41.3" lengthAdjust="spacingAndGlyphs" fill="#000" stroke="#fff" stroke-opacity="0.85" stroke-width="1.6" paint-order="stroke" >Μέγαρα</text>
<text dy="0.35em" transform="translate(932.2,557.6) rotate(-20.0)" font-family="Liberation Sans,sans-serif" font-size="12" text-anchor="middle" textLength="33.3" lengthAdjust="spacingAndGlyphs" fill="#000" stroke="#fff" stroke-opacity="0.85" stroke-width="1.6" paint-order="stroke" >Ερμού</text>
<text dy="0.35em" transform="translate(333.0,581.4) rotate(34.0)" font-family="Liberation Sans,sans-serif" font-size="12" text-anchor="middle" textLength="47" lengthAdjust="spacingAndGlyphs" fill="#000" stroke="#fff" stroke-opacity="0.85" stroke-width="1.6" paint-order="stroke" >Αιγείδων</text>
<text dy="0.35em" transform="translate(1483.7,767.8) rotate(-16.4)" font-family="Liberation Sans,sans-serif" font-size="12" text-anchor="middle" textLength="78.6" lengthAdjust="spacingAndGlyphs" fill="#000" stroke="#fff" stroke-opacity="0.85" stroke-width="1.6" paint-order="stroke" >Ανδρέα Μεταξά</text>
<text dy="0.35em" transform="translate(746.2,522.0) rotate(0.0)" font-family="Liberation Sans,sans-serif" font-size="11" text-anchor="middle" textLength="53.5" lengthAdjust="spacingAndGlyphs" fill="#9c1c3a" font-style="italic" stroke="#fff" stroke-opacity="0.85" stroke-width="1.6" paint-order="stroke" >Καλυφτάκη</text>
<text dy="0.35em" transform="translate(821.5,238.7) rotate(0.0)" font-family="Liberation Sans,sans-serif" font-size="10" text-anchor="middle" textLength="38" lengthAdjust="spacingAndGlyphs" fill="#0a7bef" stroke="#fff" stroke-opacity="0.85" stroke-width="1.6" paint-order="stroke" >ΜΕΓΑΡΑ</text>
<g transform="translate(821,225.5)"><rect x="-3.6" y="-4.6" width="7.2" height="8" rx="1.3" fill="none" stroke="#0a8fe8" stroke-width="1.3"/><path d="M-3.3,-0.5 H3.3" stroke="#0a8fe8" stroke-width="1"/><path d="M-2.5,4.500 V5.6 M2.500,4.500 V5.6" stroke="#0a8fe8" stroke-width="1.2"/></g>
<rect x="826" y="363" width="21" height="19" rx="2.500" fill="#f1d5dc" stroke="#d9a6b4" stroke-width="0.8"/>
<text dy="0.35em" transform="translate(836.5,372.8) rotate(0.0)" font-family="Liberation Sans,sans-serif" font-size="13" text-anchor="middle" textLength="14" lengthAdjust="spacingAndGlyphs" fill="#4a3038" >A1</text>
<text dy="0.35em" transform="translate(1578.5,359.5) rotate(0.0)" font-family="Liberation Sans,sans-serif" font-size="10.5" text-anchor="middle" textLength="11" lengthAdjust="spacingAndGlyphs" fill="#666" stroke="#fff" stroke-opacity="0.85" stroke-width="1.6" paint-order="stroke" >52</text>
<text dy="0.35em" transform="translate(908.8,389.0) rotate(0.0)" font-family="Liberation Sans,sans-serif" font-size="16" text-anchor="middle" textLength="9" lengthAdjust="spacingAndGlyphs" fill="#6fb9b4" >P</text>
<text dy="0.35em" transform="translate(1403.0,624.2) rotate(0.0)" font-family="Liberation Sans,sans-serif" font-size="16" text-anchor="middle" textLength="9" lengthAdjust="spacingAndGlyphs" fill="#79a9d8" >P</text>
<g transform="translate(1017.3,362.0) scale(1.00)"><path d="M0,-12.500 L-6.500,-6.500 C-8.800,-5.500 -9.300,-3.500 -9,-1.300 H9 C9.300,-3.500 8.800,-5.500 6.500,-6.500 Z" fill="#fff" stroke="#111" stroke-width="0.800" stroke-linejoin="round"/><path d="M-2.800,-2.900 H2.800" stroke="#111" stroke-width="1.100"/><path d="M-7.300,-1.300 V5 C-7.300,9.500 -4,12.600 0,12.600 C4,12.600 7.300,9.500 7.300,5 V-1.300 Z" fill="#b7c6d2" stroke="#111" stroke-width="0.900"/><path d="M-7,0 H7" stroke="#5f7b8e" stroke-width="0.900"/><circle cx="0" cy="6" r="4.600" fill="#93a7b8" stroke="#2a2a2a" stroke-width="0.800"/><path d="M-3,6 A3,3 0 0 1 3,6 M-4.500,9 L-2,6.500 M4.500,9 L2,6.500" fill="none" stroke="#3a4650" stroke-width="0.800"/><circle cx="2" cy="5.300" r="1.200" fill="#4fd0ff"/><circle cx="-1.500" cy="6.500" r="0.900" fill="#333"/></g>
<g transform="translate(866.0,543.0) scale(1.00)"><path d="M0,-12.500 L-6.500,-6.500 C-8.800,-5.500 -9.300,-3.500 -9,-1.300 H9 C9.300,-3.500 8.800,-5.500 6.500,-6.500 Z" fill="#fff" stroke="#111" stroke-width="0.800" stroke-linejoin="round"/><path d="M-2.800,-2.900 H2.800" stroke="#111" stroke-width="1.100"/><path d="M-7.300,-1.300 V5 C-7.300,9.500 -4,12.600 0,12.600 C4,12.600 7.300,9.500 7.300,5 V-1.300 Z" fill="#b7c6d2" stroke="#111" stroke-width="0.900"/><path d="M-7,0 H7" stroke="#5f7b8e" stroke-width="0.900"/><circle cx="0" cy="6" r="4.600" fill="#93a7b8" stroke="#2a2a2a" stroke-width="0.800"/><path d="M-3,6 A3,3 0 0 1 3,6 M-4.500,9 L-2,6.500 M4.500,9 L2,6.500" fill="none" stroke="#3a4650" stroke-width="0.800"/><circle cx="2" cy="5.300" r="1.200" fill="#4fd0ff"/><circle cx="-1.500" cy="6.500" r="0.900" fill="#333"/></g>
<g transform="translate(1089.0,484.5) scale(1.00)"><path d="M0,-12.500 L-6.500,-6.500 C-8.800,-5.500 -9.300,-3.500 -9,-1.300 H9 C9.300,-3.500 8.800,-5.500 6.500,-6.500 Z" fill="#fff" stroke="#111" stroke-width="0.800" stroke-linejoin="round"/><path d="M-2.800,-2.900 H2.800" stroke="#111" stroke-width="1.100"/><path d="M-7.300,-1.300 V5 C-7.300,9.500 -4,12.600 0,12.600 C4,12.600 7.300,9.500 7.300,5 V-1.300 Z" fill="#b7c6d2" stroke="#111" stroke-width="0.900"/><path d="M-7,0 H7" stroke="#5f7b8e" stroke-width="0.900"/><circle cx="0" cy="6" r="4.600" fill="#93a7b8" stroke="#2a2a2a" stroke-width="0.800"/><path d="M-3,6 A3,3 0 0 1 3,6 M-4.500,9 L-2,6.500 M4.500,9 L2,6.500" fill="none" stroke="#3a4650" stroke-width="0.800"/><circle cx="2" cy="5.300" r="1.200" fill="#4fd0ff"/><circle cx="-1.500" cy="6.500" r="0.900" fill="#333"/></g>
<rect x="957.3" y="374.4" width="12.7" height="20.1" fill="#7b3109"/><path d="M955.3,396.1 H972.0" stroke="#a0521c" stroke-width="1"/><rect x="960.3" y="383.4" width="0.8" height="2.5" fill="#d9a679"/>
<rect x="977.4" y="451.2" width="12.4" height="20.4" fill="#7b3109"/><path d="M975.4,473.2 H991.8" stroke="#a0521c" stroke-width="1"/><rect x="980.4" y="460.4" width="0.8" height="2.5" fill="#d9a679"/>
<rect x="1021.6" y="458.7" width="10.8" height="21.2" fill="none" stroke="#7b3109" stroke-width="1"/><rect x="1023.3" y="460.7" width="7.4" height="18.7" fill="#7b3109"/><path d="M1018.6,480.4 H1035.4" stroke="#7b3109" stroke-width="1.6"/><rect x="1023.7" y="467.8" width="0.9" height="2.5" fill="#e8c9a8"/>
<rect x="930.0" y="485.8" width="10.3" height="20.7" fill="none" stroke="#7b3109" stroke-width="1"/><rect x="931.7" y="487.8" width="6.9" height="18.2" fill="#7b3109"/><path d="M927.0,507.0 H943.3" stroke="#7b3109" stroke-width="1.6"/><rect x="932.1" y="494.6" width="0.9" height="2.5" fill="#e8c9a8"/>
<rect x="1081.1" y="463.5" width="7.4" height="21.0" fill="none" stroke="#7b3109" stroke-width="1"/><rect x="1082.8" y="465.5" width="4.0" height="18.5" fill="#7b3109"/><path d="M1078.1,485.0 H1091.5" stroke="#7b3109" stroke-width="1.6"/><rect x="1083.2" y="472.5" width="0.9" height="2.5" fill="#e8c9a8"/>
<g transform="translate(988,409)"><rect x="-9.5" y="-6" width="19" height="5.5" rx="1" fill="#fff" stroke="#111" stroke-width="0.9"/><path d="M-6,0 H8 V3.500 H-4 Z" fill="#ddd" stroke="#111" stroke-width="0.8"/><path d="M-4,1 V3 M-1.5,1 V3 M1,1 V3 M3.500,1 V3 M6,1 V3" stroke="#111" stroke-width="0.7"/><circle cx="-4" cy="12" r="5.800" fill="#eee" stroke="#111" stroke-width="0.9"/><circle cx="-5" cy="13" r="1.5" fill="none" stroke="#111" stroke-width="0.8"/><circle cx="-1.5" cy="10" r="1" fill="none" stroke="#111" stroke-width="0.7"/><path d="M-9.500,7 l-1.500,-1.500 M-7,5.500 l-0.500,-2" stroke="#111" stroke-width="0.8"/></g>
<g transform="translate(1010.5,408)"><rect x="-10.5" y="-5.500" width="21" height="3.600" fill="#d81b60"/><path d="M-7,-1.900 H7 L5,2.500 H-5 Z" fill="#f5b66e" stroke="#e08a2a" stroke-width="0.5"/><path d="M-3,-1.500 V2 M0,-1.500 V2 M3,-1.500 V2" stroke="#e0913a" stroke-width="0.6"/><path d="M-3,5 l1,4 M0,5 l1,4 M3,5 l1,4" stroke="#2a4f7a" stroke-width="0.8"/><path d="M-3.500,-9.500 a4.500,4.500 0 0 1 7,0 M-2,-8 a2.500,2.500 0 0 1 4,0" fill="none" stroke="#2a4f7a" stroke-width="0.8"/></g>
<g transform="translate(1092,469)" fill="#000" stroke="#000" stroke-linecap="round" stroke-linejoin="round"><circle cx="4.200" cy="-14" r="3.100" stroke="none"/><path d="M3,-10 L-1,-1.500" fill="none" stroke-width="5.600"/><path d="M-1,-1.500 L4.500,4 L5,14" fill="none" stroke-width="4.400"/><path d="M-1.500,-1 L-5.500,6.500 L-11.500,8.500" fill="none" stroke-width="4.200"/><path d="M2.500,-9.500 L-5,-6.500 L-7,-0.500" fill="none" stroke-width="3.200"/><path d="M3.500,-9 L8,-3 L12.500,-1.500" fill="none" stroke-width="3"/></g>
<g transform="translate(770.500,534)"><rect x="0" y="0" width="24" height="22.500" fill="#2f80ff" stroke="#5aa5ff" stroke-width="1.200"/><rect x="2.800" y="2.800" width="10.500" height="16.500" fill="#e8ecff"/><circle cx="8" cy="9.500" r="2.800" fill="#ffb07a"/><path d="M5.200,8.500 a2.800,2.800 0 0 1 5.600,0 z" fill="#ff8a3c"/><path d="M3.500,19.300 c0,-6 9,-6 9,0 z" fill="#e8245e"/><path d="M16,5 H21 M16,9 H21 M16,13 H19.500" stroke="#0b3fb5" stroke-width="1.200"/><rect x="16" y="16.500" width="5" height="2.500" fill="#0b3fb5"/></g>
<path d="M994.2,646.0 v-8 a3,3.500 0 0 1 6,0 v8 z" fill="#5a5a5a"/><path d="M1002.4,636.0 v10 M1000.2,641.0 h3" stroke="#5a5a5a" stroke-width="1" fill="none"/>
<path d="M998.0,663.0 v-8 a3,3.500 0 0 1 6,0 v8 z" fill="#5a5a5a"/><path d="M1006.2,653.0 v10 M1004.0,658.0 h3" stroke="#5a5a5a" stroke-width="1" fill="none"/>
<path d="M1002.5,680.2 v-8 a3,3.500 0 0 1 6,0 v8 z" fill="#5a5a5a"/><path d="M1010.7,670.2 v10 M1008.5,675.2 h3" stroke="#5a5a5a" stroke-width="1" fill="none"/>
<path d="M1008.2,706.2 v-8 a3,3.500 0 0 1 6,0 v8 z" fill="#5a5a5a"/><path d="M1016.4,696.2 v10 M1014.2,701.2 h3" stroke="#5a5a5a" stroke-width="1" fill="none"/>
<path d="M1015.3,733.0 v-8 a3,3.500 0 0 1 6,0 v8 z" fill="#5a5a5a"/><path d="M1023.5,723.0 v10 M1021.3,728.0 h3" stroke="#5a5a5a" stroke-width="1" fill="none"/>
<path d="M1019.2,750.0 v-8 a3,3.500 0 0 1 6,0 v8 z" fill="#5a5a5a"/><path d="M1027.4,740.0 v10 M1025.2,745.0 h3" stroke="#5a5a5a" stroke-width="1" fill="none"/>
<path d="M1023.0,768.7 v-8 a3,3.500 0 0 1 6,0 v8 z" fill="#5a5a5a"/><path d="M1031.2,758.7 v10 M1029.0,763.7 h3" stroke="#5a5a5a" stroke-width="1" fill="none"/>
<g transform="translate(966,594.500)"><path d="M-2,-4.500 V6" stroke="#555" stroke-width="1.400"/><path d="M-2,-4 H4.500 M-1,-7.500 q2,-2 4,0 t4,-0.500" fill="none" stroke="#555" stroke-width="1"/></g>
<g transform="translate(629,478) rotate(25)"><path d="M-2.500,-1 H2.500 M-2.500,1 H2.500 M-0.800,-2.500 L0.800,2.500" stroke="#222" stroke-width="0.700"/></g>
<g transform="translate(1386.7,773) rotate(15)"><path d="M-2.500,-1 H2.500 M-2.500,1 H2.500 M-0.800,-2.500 L0.800,2.500" stroke="#222" stroke-width="0.700"/></g>
<g transform="translate(1492,531) rotate(30)"><path d="M-2.500,-1 H2.500 M-2.500,1 H2.500 M-0.800,-2.500 L0.800,2.500" stroke="#222" stroke-width="0.700"/></g>
<g transform="translate(1536,763) rotate(15)"><path d="M-2.500,-1 H2.500 M-2.500,1 H2.500 M-0.800,-2.500 L0.800,2.500" stroke="#222" stroke-width="0.700"/></g>
<path d="M938.5,770.500 V776 H981.500 V770.500" fill="none" stroke="#000" stroke-width="2"/>
<text x="958.5" y="768.500" font-family="Liberation Sans,sans-serif" font-size="10.500" text-anchor="middle" textLength="21" lengthAdjust="spacingAndGlyphs" fill="#000" stroke="#fff" stroke-opacity="0.800" stroke-width="1.500" paint-order="stroke">20 m</text></svg>
<div class="b" style="left:290px;top:95px;width:66px;height:30px;background:#b6b5b3;"></div>
<span class="t" style="left:296.5px;top:101.3px;font-size:13px;line-height:17px;color:#fff;transform:scaleX(0.8610);">FullScreen</span>
<div class="b" style="left:1395.5px;top:85px;width:244.5px;height:155.5px;background:rgba(165,165,165,0.750);"></div>
<span class="t" style="left:1414.2px;top:97.5px;font-size:13px;line-height:17px;color:#fff;transform:scaleX(0.9152);">OpenStreetMap</span>
<div class="b" style="left:1504.5px;top:97.5px;width:17px;height:17px;background:#494949;box-shadow:0 0 0 0.500px #d8d8d8;"></div>
<svg class="b" style="left:1504.500px;top:97.5px" width="17" height="17"><polyline points="3.500,8.500 7,12 13.500,4.500" fill="none" stroke="#8fa3ba" stroke-width="1.700"/></svg>
<div class="b" style="left:1534px;top:105.4px;width:93px;height:1.3px;background:#6f8296;"></div>
<div class="b" style="left:1626px;top:94px;width:8.4px;height:24px;background:rgba(115,135,155,0.800);border-radius:4.200px;"></div>
<span class="t" style="left:1416.2px;top:127.5px;font-size:13px;line-height:17px;color:#fff;transform:scaleX(0.8731);">camera_fovs (1)</span>
<div class="b" style="left:1504.5px;top:127.5px;width:17px;height:17px;background:#494949;box-shadow:0 0 0 0.500px #d8d8d8;"></div>
<svg class="b" style="left:1504.500px;top:127.5px" width="17" height="17"><polyline points="3.500,8.500 7,12 13.500,4.500" fill="none" stroke="#8fa3ba" stroke-width="1.700"/></svg>
<div class="b" style="left:1534px;top:135.4px;width:93px;height:1.3px;background:#6f8296;"></div>
<div class="b" style="left:1626px;top:124px;width:8.4px;height:24px;background:rgba(115,135,155,0.800);border-radius:4.200px;"></div>
<span class="t" style="left:1415.2px;top:157.5px;font-size:13px;line-height:17px;color:#fff;transform:scaleX(0.8638);">Tyco1_tracks (1)</span>
<div class="b" style="left:1504.5px;top:157.5px;width:17px;height:17px;background:#494949;box-shadow:0 0 0 0.500px #d8d8d8;"></div>
<svg class="b" style="left:1504.500px;top:157.5px" width="17" height="17"><polyline points="3.500,8.500 7,12 13.500,4.500" fill="none" stroke="#8fa3ba" stroke-width="1.700"/></svg>
<div class="b" style="left:1534px;top:165.4px;width:93px;height:1.3px;background:#6f8296;"></div>
<div class="b" style="left:1626px;top:154px;width:8.4px;height:24px;background:rgba(115,135,155,0.800);border-radius:4.200px;"></div>
<span class="t" style="left:1407.2px;top:187.5px;font-size:13px;line-height:17px;color:#fff;transform:scaleX(0.8809);">sensors-ifsas (12)</span>
<div class="b" style="left:1504.5px;top:187.5px;width:17px;height:17px;background:#494949;box-shadow:0 0 0 0.500px #d8d8d8;"></div>
<svg class="b" style="left:1504.500px;top:187.5px" width="17" height="17"><polyline points="3.500,8.500 7,12 13.500,4.500" fill="none" stroke="#8fa3ba" stroke-width="1.700"/></svg>
<div class="b" style="left:1534px;top:195.4px;width:93px;height:1.3px;background:#6f8296;"></div>
<div class="b" style="left:1626px;top:184px;width:8.4px;height:24px;background:rgba(115,135,155,0.800);border-radius:4.200px;"></div>
<div class="b" style="left:1409px;top:222.3px;width:225px;height:1px;background:#acaba9;"></div>
<div class="b" style="left:1401px;top:211px;width:8px;height:24px;background:rgba(115,135,155,0.850);border-radius:4px;"></div>
<div class="b" style="left:1574.6px;top:717px;width:21.3px;height:20.7px;background:#303030;box-shadow:0 0 3px 1.500px rgba(30,30,30,0.600);"></div>
<div class="b" style="left:1599.2px;top:717px;width:19.7px;height:20.7px;background:#303030;box-shadow:0 0 3px 1.500px rgba(30,30,30,0.600);"></div>
<svg class="b" style="left:1574.600px;top:717px" width="46" height="21"><path d="M4,10.300 H17.200 M10.600,3.700 V16.900" stroke="#b4b4b4" stroke-width="2.600"/><path d="M28,10.300 H41" stroke="#b4b4b4" stroke-width="2.600"/></svg>
<div class="b" style="left:1518.8px;top:746.5px;width:100.6px;height:11.5px;background:rgba(255,255,255,0.350);border-radius:6px;"></div>
<span class="t" style="left:1521.0px;top:743.5px;font-size:13px;line-height:17px;color:#000;transform:scaleX(0.8778);">2647869, 4591484</span>
<div class="b" style="left:1467px;top:763.5px;width:170px;height:13px;background:rgba(255,255,255,0.550);border-radius:6.500px;"></div>
<span class="t" style="left:1470.6px;top:761.5px;font-size:13px;line-height:17px;color:#111;transform:scaleX(0.9297);">© OpenStreetMap contributors</span>
<svg class="b" style="left:5px;top:360px" width="14" height="20"><polyline points="3,2 11,10 3,18" fill="none" stroke="#fff" stroke-width="1.6"/></svg>
<svg class="b" style="left:5px;top:485px" width="14" height="20"><polyline points="3,2 11,10 3,18" fill="none" stroke="#fff" stroke-width="1.6"/></svg>
<span class="t" style="left:12px;top:432px;font-size:12px;line-height:16px;font-weight:bold;color:#fff;transform:translate(-50%,-50%) rotate(90deg) scaleX(0.93);transform-origin:50% 50%;">Systems View</span>
<svg class="b" style="left:263px;top:94px" width="12" height="6"><polygon points="0,6 6,0 12,6" fill="#a8a8a8"/></svg><div class="b" style="left:263px;top:105px;width:12px;height:649px;background:#bababa;"></div><svg class="b" style="left:263px;top:768px" width="12" height="6"><polygon points="0,0 12,0 6,6" fill="#a8a8a8"/></svg>
<div class="b" style="left:28px;top:91px;width:234px;height:334px;border:1px solid #4b5866;box-sizing:border-box;"></div>
<div class="b" style="left:28px;top:91px;width:234px;height:26px;background:#5a6775;"></div><svg class="b" style="left:29px;top:92px" width="24" height="24" viewBox="-12 -12 24 24"><circle r="8.6" fill="none" stroke="#f0f0f0" stroke-width="1.2"/><polyline points="-4,2 0,-2 4,2" fill="none" stroke="#f0f0f0" stroke-width="2"/></svg><span class="t" style="left:55.0px;top:96.5px;font-size:12px;line-height:16px;color:#fff;transform:scaleX(0.8544);">SYSTEMS</span>
<div class="b" style="left:33px;top:121px;width:224px;height:299px;background:#252525;"></div>
<svg class="b" style="left:244px;top:126px" width="12" height="6"><polygon points="0,6 6,0 12,6" fill="#a8a8a8"/></svg><div class="b" style="left:244px;top:137px;width:12px;height:244px;background:#bababa;"></div><svg class="b" style="left:244px;top:411px" width="12" height="6"><polygon points="0,0 12,0 6,6" fill="#a8a8a8"/></svg>
<svg class="b" style="left:39px;top:129px" width="10" height="10"><polygon points="8,1 8,8 1,8" fill="#f0f0f0"/></svg>
<span class="t" style="left:55.0px;top:125.5px;font-size:12px;line-height:16px;color:#fff;transform:scaleX(0.8395);">SITE1</span>
<svg class="b" style="left:52px;top:151.5px" width="10" height="14"><polygon points="3.5,1.5 8.5,7 3.5,12.5" fill="none" stroke="#e0e0e0" stroke-width="1.1"/></svg>
<svg class="b" style="left:67px;top:150.5px" width="16" height="16" viewBox="0 0 16 16"><path d="M7.500,1 C5.300,2.500 3.300,2.600 1.800,2.600 V7.500 C1.800,11.500 4.500,13.800 7.500,15 C10.500,13.800 13.200,11.500 13.200,7.500 V2.600 C11.700,2.600 9.700,2.500 7.500,1 Z" fill="#7fb2f0" stroke="#2a62c8" stroke-width="0.900" stroke-dasharray="1.300 0.700"/><path d="M7.500,3.800 V10 M5,6.300 H10" stroke="#fff" stroke-width="1.500"/><path d="M12,9.800 C13.800,12 14.300,13.200 13,14.800 C11.200,15.800 10,13.600 12,9.800 Z" fill="#4f94ee" stroke="#1e50b0" stroke-width="0.400"/></svg>
<span class="t" style="left:83.0px;top:150.5px;font-size:12px;line-height:16px;color:#fff;">fire system 1 &nbsp;[ON]</span>
<svg class="b" style="left:52px;top:176.5px" width="10" height="14"><polygon points="3.5,1.5 8.5,7 3.5,12.5" fill="none" stroke="#e0e0e0" stroke-width="1.1"/></svg>
<svg class="b" style="left:67px;top:175.5px" width="16" height="16" viewBox="0 0 16 16"><path d="M7.500,1 C5.300,2.500 3.300,2.600 1.800,2.600 V7.500 C1.800,11.500 4.500,13.800 7.500,15 C10.500,13.800 13.200,11.500 13.200,7.500 V2.600 C11.700,2.600 9.700,2.500 7.500,1 Z" fill="#7fb2f0" stroke="#2a62c8" stroke-width="0.900" stroke-dasharray="1.300 0.700"/><path d="M7.500,3.800 V10 M5,6.300 H10" stroke="#fff" stroke-width="1.500"/><path d="M12,9.800 C13.800,12 14.300,13.200 13,14.800 C11.200,15.800 10,13.600 12,9.800 Z" fill="#4f94ee" stroke="#1e50b0" stroke-width="0.400"/></svg>
<span class="t" style="left:83.0px;top:175.5px;font-size:12px;line-height:16px;color:#fff;transform:scaleX(0.9834);">Fire 4 &nbsp;[ON]</span>
<svg class="b" style="left:52px;top:201.5px" width="10" height="14"><polygon points="3.5,1.5 8.5,7 3.5,12.5" fill="none" stroke="#e0e0e0" stroke-width="1.1"/></svg>
<svg class="b" style="left:67px;top:200.5px" width="16" height="16" viewBox="0 0 16 16"><path d="M2,0.500 V15.500 M14,0.500 V15.500" stroke="#29a9e8" stroke-width="0.700" stroke-dasharray="1.600 1.100"/><path d="M0,9 H3.500 M12.500,9 H16" stroke="#29a9e8" stroke-width="0.800"/><rect x="4" y="6.500" width="8" height="6.500" fill="#1ea7ee"/><path d="M5.800,6.500 V5.300 A2.200,2.200 0 0 1 10.200,5.300 V6.500" fill="none" stroke="#1ea7ee" stroke-width="1"/><rect x="7.200" y="8.800" width="1.600" height="1.800" fill="#e8f8ff"/></svg>
<span class="t" style="left:83.0px;top:200.5px;font-size:12px;line-height:16px;color:#fff;transform:scaleX(0.9448);">IFSAS68 &nbsp;[ON]</span>
<svg class="b" style="left:52px;top:226.5px" width="10" height="14"><polygon points="3.5,1.5 8.5,7 3.5,12.5" fill="none" stroke="#e0e0e0" stroke-width="1.1"/></svg>
<svg class="b" style="left:67px;top:225.5px" width="16" height="16" viewBox="0 0 16 16"><path d="M2,0.500 V15.500 M14,0.500 V15.500" stroke="#29a9e8" stroke-width="0.700" stroke-dasharray="1.600 1.100"/><path d="M0,9 H3.500 M12.500,9 H16" stroke="#29a9e8" stroke-width="0.800"/><rect x="4" y="6.500" width="8" height="6.500" fill="#1ea7ee"/><path d="M5.800,6.500 V5.300 A2.200,2.200 0 0 1 10.200,5.300 V6.500" fill="none" stroke="#1ea7ee" stroke-width="1"/><rect x="7.200" y="8.800" width="1.600" height="1.800" fill="#e8f8ff"/></svg>
<span class="t" style="left:83.0px;top:225.5px;font-size:12px;line-height:16px;color:#fff;transform:scaleX(0.9726);">Symmetry_1 &nbsp;[ON]</span>
<svg class="b" style="left:52px;top:251.5px" width="10" height="14"><polygon points="3.5,1.5 8.5,7 3.5,12.5" fill="none" stroke="#e0e0e0" stroke-width="1.1"/></svg>
<svg class="b" style="left:67px;top:250.5px" width="16" height="16" viewBox="0 0 16 16"><rect x="1" y="1.2" width="14" height="2.800" rx="1.200" fill="#d8f4ff"/><rect x="4.3" y="1.2" width="0.900" height="2.800" fill="#1a3a55"/><rect x="7.6" y="1.2" width="0.900" height="2.800" fill="#1a3a55"/><rect x="10.9" y="1.2" width="0.900" height="2.800" fill="#1a3a55"/><rect x="1" y="2.1" width="14" height="1" fill="#5ac8f5" opacity="0.800"/><rect x="1" y="4.9" width="14" height="2.800" rx="1.200" fill="#d8f4ff"/><rect x="4.3" y="4.9" width="0.900" height="2.800" fill="#1a3a55"/><rect x="7.6" y="4.9" width="0.900" height="2.800" fill="#1a3a55"/><rect x="10.9" y="4.9" width="0.900" height="2.800" fill="#1a3a55"/><rect x="1" y="5.8" width="14" height="1" fill="#5ac8f5" opacity="0.800"/><rect x="1" y="8.6" width="14" height="2.800" rx="1.200" fill="#d8f4ff"/><rect x="4.3" y="8.6" width="0.900" height="2.800" fill="#1a3a55"/><rect x="7.6" y="8.6" width="0.900" height="2.800" fill="#1a3a55"/><rect x="10.9" y="8.6" width="0.900" height="2.800" fill="#1a3a55"/><rect x="1" y="9.5" width="14" height="1" fill="#5ac8f5" opacity="0.800"/><path d="M2.500,12.400 V15.800 M13.500,12.400 V15.800" stroke="#000" stroke-width="2.200"/><path d="M1,12.700 H15" stroke="#000" stroke-width="1.400"/></svg>
<span class="t" style="left:83.0px;top:250.5px;font-size:12px;line-height:16px;color:#fff;transform:scaleX(0.9551);">ExacqNVR &nbsp;[ON]</span>
<svg class="b" style="left:52px;top:276.5px" width="10" height="14"><polygon points="3.5,1.5 8.5,7 3.5,12.5" fill="none" stroke="#e0e0e0" stroke-width="1.1"/></svg>
<svg class="b" style="left:67px;top:275.5px" width="16" height="16" viewBox="0 0 16 16"><rect x="1" y="1.2" width="14" height="2.800" rx="1.200" fill="#d8f4ff"/><rect x="4.3" y="1.2" width="0.900" height="2.800" fill="#1a3a55"/><rect x="7.6" y="1.2" width="0.900" height="2.800" fill="#1a3a55"/><rect x="10.9" y="1.2" width="0.900" height="2.800" fill="#1a3a55"/><rect x="1" y="2.1" width="14" height="1" fill="#5ac8f5" opacity="0.800"/><rect x="1" y="4.9" width="14" height="2.800" rx="1.200" fill="#d8f4ff"/><rect x="4.3" y="4.9" width="0.900" height="2.800" fill="#1a3a55"/><rect x="7.6" y="4.9" width="0.900" height="2.800" fill="#1a3a55"/><rect x="10.9" y="4.9" width="0.900" height="2.800" fill="#1a3a55"/><rect x="1" y="5.8" width="14" height="1" fill="#5ac8f5" opacity="0.800"/><rect x="1" y="8.6" width="14" height="2.800" rx="1.200" fill="#d8f4ff"/><rect x="4.3" y="8.6" width="0.900" height="2.800" fill="#1a3a55"/><rect x="7.6" y="8.6" width="0.900" height="2.800" fill="#1a3a55"/><rect x="10.9" y="8.6" width="0.900" height="2.800" fill="#1a3a55"/><rect x="1" y="9.5" width="14" height="1" fill="#5ac8f5" opacity="0.800"/><path d="M2.500,12.400 V15.800 M13.500,12.400 V15.800" stroke="#000" stroke-width="2.200"/><path d="M1,12.700 H15" stroke="#000" stroke-width="1.400"/></svg>
<span class="t" style="left:83.0px;top:275.5px;font-size:12px;line-height:16px;color:#fff;transform:scaleX(0.9932);">HikvisionNVR &nbsp;[ON]</span>
<svg class="b" style="left:52px;top:301.5px" width="10" height="14"><polygon points="3.5,1.5 8.5,7 3.5,12.5" fill="none" stroke="#e0e0e0" stroke-width="1.1"/></svg>
<svg class="b" style="left:67px;top:300.5px" width="16" height="16" viewBox="0 0 16 16"><rect x="1" y="1.2" width="14" height="2.800" rx="1.200" fill="#d8f4ff"/><rect x="4.3" y="1.2" width="0.900" height="2.800" fill="#1a3a55"/><rect x="7.6" y="1.2" width="0.900" height="2.800" fill="#1a3a55"/><rect x="10.9" y="1.2" width="0.900" height="2.800" fill="#1a3a55"/><rect x="1" y="2.1" width="14" height="1" fill="#5ac8f5" opacity="0.800"/><rect x="1" y="4.9" width="14" height="2.800" rx="1.200" fill="#d8f4ff"/><rect x="4.3" y="4.9" width="0.900" height="2.800" fill="#1a3a55"/><rect x="7.6" y="4.9" width="0.900" height="2.800" fill="#1a3a55"/><rect x="10.9" y="4.9" width="0.900" height="2.800" fill="#1a3a55"/><rect x="1" y="5.8" width="14" height="1" fill="#5ac8f5" opacity="0.800"/><rect x="1" y="8.6" width="14" height="2.800" rx="1.200" fill="#d8f4ff"/><rect x="4.3" y="8.6" width="0.900" height="2.800" fill="#1a3a55"/><rect x="7.6" y="8.6" width="0.900" height="2.800" fill="#1a3a55"/><rect x="10.9" y="8.6" width="0.900" height="2.800" fill="#1a3a55"/><rect x="1" y="9.5" width="14" height="1" fill="#5ac8f5" opacity="0.800"/><path d="M2.500,12.400 V15.800 M13.500,12.400 V15.800" stroke="#000" stroke-width="2.200"/><path d="M1,12.700 H15" stroke="#000" stroke-width="1.400"/></svg>
<span class="t" style="left:83.0px;top:300.5px;font-size:12px;line-height:16px;color:#fff;transform:scaleX(0.9776);">DahuaNVR &nbsp;[ON]</span>
<svg class="b" style="left:52px;top:326.5px" width="10" height="14"><polygon points="3.5,1.5 8.5,7 3.5,12.5" fill="none" stroke="#e0e0e0" stroke-width="1.1"/></svg>
<svg class="b" style="left:67px;top:325.5px" width="16" height="16" viewBox="0 0 16 16"><rect x="1" y="1.2" width="14" height="2.800" rx="1.200" fill="#d8f4ff"/><rect x="4.3" y="1.2" width="0.900" height="2.800" fill="#1a3a55"/><rect x="7.6" y="1.2" width="0.900" height="2.800" fill="#1a3a55"/><rect x="10.9" y="1.2" width="0.900" height="2.800" fill="#1a3a55"/><rect x="1" y="2.1" width="14" height="1" fill="#5ac8f5" opacity="0.800"/><rect x="1" y="4.9" width="14" height="2.800" rx="1.200" fill="#d8f4ff"/><rect x="4.3" y="4.9" width="0.900" height="2.800" fill="#1a3a55"/><rect x="7.6" y="4.9" width="0.900" height="2.800" fill="#1a3a55"/><rect x="10.9" y="4.9" width="0.900" height="2.800" fill="#1a3a55"/><rect x="1" y="5.8" width="14" height="1" fill="#5ac8f5" opacity="0.800"/><rect x="1" y="8.6" width="14" height="2.800" rx="1.200" fill="#d8f4ff"/><rect x="4.3" y="8.6" width="0.900" height="2.800" fill="#1a3a55"/><rect x="7.6" y="8.6" width="0.900" height="2.800" fill="#1a3a55"/><rect x="10.9" y="8.6" width="0.900" height="2.800" fill="#1a3a55"/><rect x="1" y="9.5" width="14" height="1" fill="#5ac8f5" opacity="0.800"/><path d="M2.500,12.400 V15.800 M13.500,12.400 V15.800" stroke="#000" stroke-width="2.200"/><path d="M1,12.700 H15" stroke="#000" stroke-width="1.400"/></svg>
<span class="t" style="left:83.0px;top:325.5px;font-size:12px;line-height:16px;color:#fff;">localhost &nbsp;[ON]</span>
<svg class="b" style="left:52px;top:351.5px" width="10" height="14"><polygon points="3.5,1.5 8.5,7 3.5,12.5" fill="none" stroke="#e0e0e0" stroke-width="1.1"/></svg>
<svg class="b" style="left:67px;top:350.5px" width="16" height="16" viewBox="0 0 16 16"><rect x="1" y="1.2" width="14" height="2.800" rx="1.200" fill="#d8f4ff"/><rect x="4.3" y="1.2" width="0.900" height="2.800" fill="#1a3a55"/><rect x="7.6" y="1.2" width="0.900" height="2.800" fill="#1a3a55"/><rect x="10.9" y="1.2" width="0.900" height="2.800" fill="#1a3a55"/><rect x="1" y="2.1" width="14" height="1" fill="#5ac8f5" opacity="0.800"/><rect x="1" y="4.9" width="14" height="2.800" rx="1.200" fill="#d8f4ff"/><rect x="4.3" y="4.9" width="0.900" height="2.800" fill="#1a3a55"/><rect x="7.6" y="4.9" width="0.900" height="2.800" fill="#1a3a55"/><rect x="10.9" y="4.9" width="0.900" height="2.800" fill="#1a3a55"/><rect x="1" y="5.8" width="14" height="1" fill="#5ac8f5" opacity="0.800"/><rect x="1" y="8.6" width="14" height="2.800" rx="1.200" fill="#d8f4ff"/><rect x="4.3" y="8.6" width="0.900" height="2.800" fill="#1a3a55"/><rect x="7.6" y="8.6" width="0.900" height="2.800" fill="#1a3a55"/><rect x="10.9" y="8.6" width="0.900" height="2.800" fill="#1a3a55"/><rect x="1" y="9.5" width="14" height="1" fill="#5ac8f5" opacity="0.800"/><path d="M2.500,12.400 V15.800 M13.500,12.400 V15.800" stroke="#000" stroke-width="2.200"/><path d="M1,12.700 H15" stroke="#000" stroke-width="1.400"/></svg>
<span class="t" style="left:83.0px;top:350.5px;font-size:12px;line-height:16px;color:#fff;transform:scaleX(0.9807);">ProvisionNVR &nbsp;[ON]</span>
<svg class="b" style="left:67px;top:375.5px" width="16" height="16" viewBox="0 0 16 16"><rect x="0.5" y="1.5" width="15" height="13" rx="1" fill="#2f7af2" stroke="#1b56c9"/><rect x="2.2" y="3.2" width="7.6" height="9.6" fill="#e8f0ff"/><circle cx="6" cy="6.8" r="1.8" fill="#ff9a3c"/><path d="M3,12.8 C3,9.5 9,9.5 9,12.8 Z" fill="#e8305a"/><path d="M11.5,4.5 H14 M11.5,7 H14 M11.5,9.5 H14" stroke="#0b2f86" stroke-width="1"/></svg>
<span class="t" style="left:83.0px;top:375.5px;font-size:12px;line-height:16px;color:#fff;transform:scaleX(0.9714);">Panel 1 &nbsp;[ON]</span>
<svg class="b" style="left:52px;top:401.5px" width="10" height="14"><polygon points="3.5,1.5 8.5,7 3.5,12.5" fill="none" stroke="#e0e0e0" stroke-width="1.1"/></svg>
<svg class="b" style="left:67px;top:400.5px" width="16" height="16" viewBox="0 0 16 16"><rect x="0.5" y="0.5" width="15" height="15" rx="1" fill="#dfe6f5" stroke="#7a86a8"/><rect x="2" y="2" width="12" height="6.5" fill="#2d5be3"/><text x="8" y="7.3" font-size="4.6" font-family="Liberation Sans,sans-serif" font-weight="bold" fill="#cfe0ff" text-anchor="middle">PLC</text><rect x="2" y="10" width="5" height="4" fill="#6d7ba8"/><rect x="8.5" y="10" width="5.5" height="1.6" fill="#e8505a"/><rect x="8.5" y="12.4" width="5.5" height="1.6" fill="#4a68c8"/></svg>
<span class="t" style="left:83.0px;top:400.5px;font-size:12px;line-height:16px;color:#fff;transform:scaleX(0.9524);">PLC system 1 &nbsp;[ON]</span>
<div class="b" style="left:28px;top:428px;width:234px;height:184px;border:1px solid #4b5866;box-sizing:border-box;"></div>
<div class="b" style="left:28px;top:428px;width:234px;height:26px;background:#5a6775;"></div><svg class="b" style="left:29px;top:429px" width="24" height="24" viewBox="-12 -12 24 24"><circle r="8.6" fill="none" stroke="#f0f0f0" stroke-width="1.2"/><polyline points="-4,2 0,-2 4,2" fill="none" stroke="#f0f0f0" stroke-width="2"/></svg><span class="t" style="left:55.0px;top:433.5px;font-size:12px;line-height:16px;color:#fff;transform:scaleX(0.9050);">VIEWS</span>
<div class="b" style="left:33px;top:458px;width:224px;height:150px;background:#252525;"></div>
<span class="t" style="left:39.0px;top:460.5px;font-size:12px;line-height:16px;color:#fff;font-weight:bold;">ID</span>
<span class="t" style="left:59.5px;top:460.5px;font-size:12px;line-height:16px;color:#fff;font-weight:bold;transform:scaleX(0.9622);">NAME</span>
<span class="t" style="left:128.5px;top:460.5px;font-size:12px;line-height:16px;color:#fff;font-weight:bold;transform:scaleX(0.9335);">SITE NAME</span>
<div class="b" style="left:55px;top:459px;width:1px;height:18px;background:#d8d8d8;"></div>
<div class="b" style="left:125px;top:459px;width:1px;height:18px;background:#d8d8d8;"></div>
<div class="b" style="left:195px;top:459px;width:1px;height:18px;background:#d8d8d8;"></div>
<div class="b" style="left:241px;top:459px;width:1px;height:18px;background:#d8d8d8;"></div>
<div class="b" style="left:39px;top:481.5px;width:9px;height:20px;overflow:hidden;"><span class="t" style="left:0.0px;top:2.0px;font-size:12px;line-height:16px;color:#fff;transform:scaleX(0.8988);">5</span></div>
<div class="b" style="left:59.5px;top:481.5px;width:58px;height:20px;overflow:hidden;"><span class="t" style="left:0.0px;top:2.0px;font-size:12px;line-height:16px;color:#fff;transform:scaleX(1.0693);">Πολιτικός Χάρτης</span></div>
<div class="b" style="left:39px;top:506.5px;width:9px;height:20px;overflow:hidden;"><span class="t" style="left:0.0px;top:2.0px;font-size:12px;line-height:16px;color:#fff;transform:scaleX(0.8988);">6</span></div>
<div class="b" style="left:59.5px;top:506.5px;width:58px;height:20px;overflow:hidden;"><span class="t" style="left:0.0px;top:2.0px;font-size:12px;line-height:16px;color:#fff;transform:scaleX(1.0376);">Δορυφορικός</span></div>
<div class="b" style="left:39px;top:531.5px;width:9px;height:20px;overflow:hidden;"><span class="t" style="left:0.0px;top:2.0px;font-size:12px;line-height:16px;color:#fff;transform:scaleX(0.8988);">8</span></div>
<div class="b" style="left:59.5px;top:531.5px;width:58px;height:20px;overflow:hidden;"><span class="t" style="left:0.0px;top:2.0px;font-size:12px;line-height:16px;color:#fff;transform:scaleX(0.9940);">Ifsas Athens</span></div>
<div class="b" style="left:39px;top:556.5px;width:9px;height:20px;overflow:hidden;"><span class="t" style="left:0.0px;top:2.0px;font-size:12px;line-height:16px;color:#fff;transform:scaleX(0.8988);">9</span></div>
<div class="b" style="left:59.5px;top:556.5px;width:58px;height:20px;overflow:hidden;"><span class="t" style="left:0.0px;top:2.0px;font-size:12px;line-height:16px;color:#fff;transform:scaleX(0.9077);">CAD</span></div>
<div class="b" style="left:39px;top:581.5px;width:9px;height:20px;overflow:hidden;"><span class="t" style="left:0.0px;top:2.0px;font-size:12px;line-height:16px;color:#fff;transform:scaleX(0.9737);">10</span></div>
<div class="b" style="left:59.5px;top:581.5px;width:58px;height:20px;overflow:hidden;"><span class="t" style="left:0.0px;top:2.0px;font-size:12px;line-height:16px;color:#fff;transform:scaleX(0.9390);">Ifsas Kifisia</span></div>
<div class="b" style="left:45px;top:584px;width:4px;height:14px;background:#555;opacity:0.0"></div>
<svg class="b" style="left:244px;top:463px" width="12" height="6"><polygon points="0,6 6,0 12,6" fill="#a8a8a8"/></svg><div class="b" style="left:244px;top:474px;width:12px;height:54px;background:#bababa;"></div><svg class="b" style="left:244px;top:598px" width="12" height="6"><polygon points="0,0 12,0 6,6" fill="#a8a8a8"/></svg>
<div class="b" style="left:28px;top:615px;width:234px;height:161px;border:1px solid #4b5866;box-sizing:border-box;"></div>
<div class="b" style="left:28px;top:615px;width:234px;height:26px;background:#5a6775;"></div><svg class="b" style="left:29px;top:616px" width="24" height="24" viewBox="-12 -12 24 24"><circle r="8.6" fill="none" stroke="#f0f0f0" stroke-width="1.2"/><polyline points="-4,2 0,-2 4,2" fill="none" stroke="#f0f0f0" stroke-width="2"/></svg><span class="t" style="left:55.0px;top:620.5px;font-size:12px;line-height:16px;color:#fff;transform:scaleX(0.8651);">GROUPS</span>
<div class="b" style="left:33px;top:645px;width:224px;height:99px;background:#252525;"></div>
<svg class="b" style="left:40px;top:650.5px" width="10" height="14"><polygon points="3.5,1.5 8.5,7 3.5,12.5" fill="none" stroke="#e0e0e0" stroke-width="1.1"/></svg>
<span class="t" style="left:55.0px;top:649.5px;font-size:12px;line-height:16px;color:#fff;transform:scaleX(0.8884);">ALL_DOORS</span>
<svg class="b" style="left:40px;top:675.5px" width="10" height="14"><polygon points="3.5,1.5 8.5,7 3.5,12.5" fill="none" stroke="#e0e0e0" stroke-width="1.1"/></svg>
<span class="t" style="left:55.0px;top:674.5px;font-size:12px;line-height:16px;color:#fff;transform:scaleX(0.8927);">ALL_CAMERAS</span>
<svg class="b" style="left:40px;top:700.5px" width="10" height="14"><polygon points="3.5,1.5 8.5,7 3.5,12.5" fill="none" stroke="#e0e0e0" stroke-width="1.1"/></svg>
<span class="t" style="left:55.0px;top:699.5px;font-size:12px;line-height:16px;color:#fff;transform:scaleX(0.8649);">ALL_SENSORS</span>
<svg class="b" style="left:40px;top:725.5px" width="10" height="14"><polygon points="3.5,1.5 8.5,7 3.5,12.5" fill="none" stroke="#e0e0e0" stroke-width="1.1"/></svg>
<span class="t" style="left:55.0px;top:724.5px;font-size:12px;line-height:16px;color:#fff;transform:scaleX(0.8400);">ALL_ACCESS</span>
<svg class="b" style="left:244px;top:650px" width="12" height="6"><polygon points="0,6 6,0 12,6" fill="#a8a8a8"/></svg><div class="b" style="left:244px;top:661px;width:12px;height:44px;background:#bababa;"></div><svg class="b" style="left:244px;top:735px" width="12" height="6"><polygon points="0,0 12,0 6,6" fill="#a8a8a8"/></svg>
<div class="b" style="left:35px;top:746px;width:219px;height:28px;background:#252525;border:1px solid #d0d0d0;border-radius:3px;box-sizing:border-box;"></div>
<svg class="b" style="left:138px;top:753px" width="14" height="14"><path d="M7,0.5 V13.5 M0.5,7 H13.5" stroke="#000" stroke-width="3.2"/></svg>
<svg class="b" style="left:1901px;top:357px" width="14" height="20"><polyline points="11,2 3,10 11,18" fill="none" stroke="#fff" stroke-width="1.6"/></svg>
<svg class="b" style="left:1901px;top:488px" width="14" height="20"><polyline points="11,2 3,10 11,18" fill="none" stroke="#fff" stroke-width="1.6"/></svg>
<span class="t" style="left:1909px;top:433px;font-size:12px;line-height:16px;font-weight:bold;color:#fff;transform:translate(-50%,-50%) rotate(-90deg) scaleX(0.93);transform-origin:50% 50%;">Workspace Bar</span>
<svg class="b" style="left:1879px;top:94px" width="12" height="6"><polygon points="0,6 6,0 12,6" fill="#a8a8a8"/></svg><div class="b" style="left:1879px;top:105px;width:12px;height:515px;background:#bababa;"></div><svg class="b" style="left:1879px;top:768px" width="12" height="6"><polygon points="0,0 12,0 6,6" fill="#a8a8a8"/></svg>
<div class="b" style="left:1644px;top:91px;width:234px;height:379px;border:1px solid #4b5866;box-sizing:border-box;"></div>
<div class="b" style="left:1644px;top:91px;width:234px;height:26px;background:#5a6775;"></div><svg class="b" style="left:1645px;top:92px" width="24" height="24" viewBox="-12 -12 24 24"><circle r="8.6" fill="none" stroke="#f0f0f0" stroke-width="1.2"/><polyline points="-4,2 0,-2 4,2" fill="none" stroke="#f0f0f0" stroke-width="2"/></svg><span class="t" style="left:1671.0px;top:96.5px;font-size:12px;line-height:16px;color:#fff;transform:scaleX(0.8655);">CREATE WORKSPACE</span>
<svg class="b" style="left:1663px;top:125px" width="60" height="60" viewBox="0 0 60 60"><rect x="0.5" y="0.5" width="59" height="59" rx="3.5" fill="#2b2b2b" stroke="#d2d2d2"/><rect x="10.5" y="10.5" width="39" height="39" rx="3" fill="none" stroke="#000" stroke-width="3"/><path d="M30,10 V50" stroke="#000" stroke-width="2.4"/></svg>
<svg class="b" style="left:1731px;top:125px" width="60" height="60" viewBox="0 0 60 60"><rect x="0.5" y="0.5" width="59" height="59" rx="3.5" fill="#2b2b2b" stroke="#d2d2d2"/><rect x="7.5" y="8.5" width="45" height="43" fill="none" stroke="#000" stroke-width="3"/><path d="M23,8 V52" stroke="#000" stroke-width="2.6"/><path d="M7,19.5 H23 M7,30 H23 M7,41 H23" stroke="#000" stroke-width="2.6"/></svg>
<svg class="b" style="left:1799px;top:125px" width="60" height="60" viewBox="0 0 60 60"><rect x="0.5" y="0.5" width="59" height="59" rx="3.5" fill="#2b2b2b" stroke="#d2d2d2"/><rect x="10" y="10" width="40" height="40" rx="7" fill="none" stroke="#000" stroke-width="1.6"/><path d="M30,10 V50 M10,30 H50" stroke="#000" stroke-width="2"/></svg>
<svg class="b" style="left:1663px;top:193px" width="60" height="60" viewBox="0 0 60 60"><rect x="0.5" y="0.5" width="59" height="59" rx="3.5" fill="#2b2b2b" stroke="#d2d2d2"/><rect x="9" y="9" width="42" height="42" fill="none" stroke="#000" stroke-width="5.5"/></svg>
<svg class="b" style="left:1731px;top:193px" width="60" height="60" viewBox="0 0 60 60"><rect x="0.5" y="0.5" width="59" height="59" rx="3.5" fill="#2b2b2b" stroke="#d2d2d2"/><rect x="11" y="11" width="37" height="37" fill="none" stroke="#000" stroke-width="1.2"/><path d="M20.25,11 V48 M11,20.25 H48" stroke="#000" stroke-width="1.2"/><path d="M29.5,11 V48 M11,29.5 H48" stroke="#000" stroke-width="1.2"/><path d="M38.75,11 V48 M11,38.75 H48" stroke="#000" stroke-width="1.2"/></svg>
<svg class="b" style="left:1799px;top:193px" width="60" height="60" viewBox="0 0 60 60"><rect x="0.5" y="0.5" width="59" height="59" rx="3.5" fill="#2b2b2b" stroke="#d2d2d2"/><rect x="12" y="11.500" width="36" height="37" fill="none" stroke="#000" stroke-width="3"/><path d="M29,11 V49" stroke="#000" stroke-width="3"/><path d="M12,20.5 H29 M12,29.5 H48 M12,38.5 H29" stroke="#000" stroke-width="3"/></svg>
<span class="t" style="left:1649.0px;top:262.5px;font-size:14px;line-height:18px;color:#fff;transform:scaleX(0.9639);">Set Workspace Name</span>
<div class="b" style="left:1656px;top:288px;width:210px;height:26px;background:#252525;border:1px solid #d0d0d0;box-sizing:border-box;"></div>
<span class="t" style="left:1649.0px;top:329.5px;font-size:14px;line-height:18px;color:#fff;transform:scaleX(0.9468);">Area</span>
<div class="b" style="left:1651px;top:350px;width:18px;height:18px;background:#252525;border:1px solid #d0d0d0;box-sizing:border-box;"></div>
<span class="t" style="left:1675.5px;top:351.0px;font-size:12px;line-height:16px;color:#fff;transform:scaleX(0.9467);">Area</span>
<span class="t" style="left:1649.0px;top:377.5px;font-size:14px;line-height:18px;color:#fff;transform:scaleX(0.9289);">Select Roles</span>
<div class="b" style="left:1651px;top:398px;width:220px;height:26px;background:#252525;"></div>
<svg class="b" style="left:1857px;top:409px" width="7" height="4"><polygon points="0,0 7,0 3.5,4" fill="#fff"/></svg>
<div class="b" style="left:1654px;top:434.5px;width:214px;height:26.5px;background:#252525;border:1px solid #d0d0d0;border-radius:3px;box-sizing:border-box;"></div><span class="t" style="left:1687.8px;top:442.1px;font-size:10px;line-height:14px;color:#fff;font-weight:bold;transform:scaleX(0.9294);transform-origin:50% 50%;">SAVE CURRENT WORKSPACE</span>
<div class="b" style="left:1644px;top:476px;width:234px;height:247px;border:1px solid #4b5866;box-sizing:border-box;"></div>
<div class="b" style="left:1644px;top:476px;width:234px;height:26px;background:#5a6775;"></div><svg class="b" style="left:1645px;top:477px" width="24" height="24" viewBox="-12 -12 24 24"><circle r="8.6" fill="none" stroke="#f0f0f0" stroke-width="1.2"/><polyline points="-4,2 0,-2 4,2" fill="none" stroke="#f0f0f0" stroke-width="2"/></svg><span class="t" style="left:1671.0px;top:481.5px;font-size:12px;line-height:16px;color:#fff;transform:scaleX(0.8695);">WORKSPACE LIST</span>
<div class="b" style="left:1649px;top:506px;width:224px;height:149px;background:#252525;"></div>
<span class="t" style="left:1655.0px;top:508.5px;font-size:12px;line-height:16px;color:#fff;font-weight:bold;transform:scaleX(0.9622);">NAME</span>
<span class="t" style="left:1755.0px;top:508.5px;font-size:12px;line-height:16px;color:#fff;font-weight:bold;transform:scaleX(0.8822);">AREA</span>
<div class="b" style="left:1751px;top:507px;width:1px;height:18px;background:#d8d8d8;"></div>
<div class="b" style="left:1801px;top:507px;width:1px;height:18px;background:#d8d8d8;"></div>
<div class="b" style="left:1857px;top:507px;width:1px;height:18px;background:#d8d8d8;"></div>
<div class="b" style="left:1649px;top:606px;width:210px;height:25px;background:#5a6775;"></div>
<span class="t" style="left:1655.0px;top:536.0px;font-size:12px;line-height:16px;color:#fff;transform:scaleX(0.9900);">only_synoptic</span>
<span class="t" style="left:1755.0px;top:536.0px;font-size:12px;line-height:16px;color:#fff;transform:scaleX(0.8858);">False</span>
<span class="t" style="left:1655.0px;top:561.0px;font-size:12px;line-height:16px;color:#fff;transform:scaleX(0.9819);">testcad</span>
<span class="t" style="left:1755.0px;top:561.0px;font-size:12px;line-height:16px;color:#fff;transform:scaleX(0.8858);">False</span>
<span class="t" style="left:1655.0px;top:586.0px;font-size:12px;line-height:16px;color:#fff;transform:scaleX(0.9669);">cadnew</span>
<span class="t" style="left:1755.0px;top:586.0px;font-size:12px;line-height:16px;color:#fff;transform:scaleX(0.8858);">False</span>
<span class="t" style="left:1655.0px;top:611.0px;font-size:12px;line-height:16px;color:#fff;transform:scaleX(0.9043);">Area_1</span>
<span class="t" style="left:1755.0px;top:611.0px;font-size:12px;line-height:16px;color:#fff;transform:scaleX(0.9078);">True</span>
<span class="t" style="left:1655.0px;top:636.0px;font-size:12px;line-height:16px;color:#fff;transform:scaleX(0.9302);">Area_2</span>
<span class="t" style="left:1755.0px;top:636.0px;font-size:12px;line-height:16px;color:#fff;transform:scaleX(0.9078);">True</span>
<svg class="b" style="left:1860px;top:511px" width="12" height="6"><polygon points="0,6 6,0 12,6" fill="#a8a8a8"/></svg><div class="b" style="left:1860px;top:599px;width:12px;height:41px;background:#bababa;"></div><svg class="b" style="left:1860px;top:644px" width="12" height="6"><polygon points="0,0 12,0 6,6" fill="#a8a8a8"/></svg>
<span class="t" style="left:1649.0px;top:656.5px;font-size:14px;line-height:18px;color:#fff;transform:scaleX(0.9760);">Set Current Workspace As Home</span>
<div class="b" style="left:1656px;top:682px;width:210px;height:27px;background:#252525;border:1px solid #d0d0d0;border-radius:3px;box-sizing:border-box;"></div><span class="t" style="left:1726.7px;top:689.8px;font-size:10px;line-height:14px;color:#fff;font-weight:bold;transform:scaleX(0.9630);transform-origin:50% 50%;">SET AS HOME</span>
<div class="b" style="left:1644px;top:726px;width:234px;height:54px;border:1px solid #4b5866;box-sizing:border-box;"></div>
<div class="b" style="left:1644px;top:726px;width:234px;height:26px;background:#5a6775;"></div><svg class="b" style="left:1645px;top:727px" width="24" height="24" viewBox="-12 -12 24 24"><circle r="8.6" fill="none" stroke="#f0f0f0" stroke-width="1.2"/><polyline points="-4,2 0,-2 4,2" fill="none" stroke="#f0f0f0" stroke-width="2"/></svg><span class="t" style="left:1671.0px;top:731.5px;font-size:12px;line-height:16px;color:#fff;transform:scaleX(0.8603);">AREAS</span>
<div class="b" style="left:1649px;top:756px;width:224px;height:19px;background:#252525;"></div>
<svg class="b" style="left:1656px;top:764px" width="10" height="10"><polygon points="8,1 8,8 1,8" fill="#f0f0f0"/></svg>
<span class="t" style="left:1671.0px;top:760.5px;font-size:12px;line-height:16px;color:#fff;transform:scaleX(0.8395);">SITE1</span>
<div class="b" style="left:0px;top:780px;width:1920px;height:260px;background:#5a6775;"></div>
<div class="b" style="left:0px;top:780px;width:1920px;height:1px;background:#3a4450;"></div>
<svg class="b" style="left:1px;top:782.5px" width="24" height="24" viewBox="-12 -12 24 24"><circle r="8.6" fill="none" stroke="#f0f0f0" stroke-width="1.2"/><polyline points="-4,2 0,-2 4,2" fill="none" stroke="#f0f0f0" stroke-width="2"/></svg>
<span class="t" style="left:27.0px;top:786.5px;font-size:12px;line-height:16px;color:#fff;transform:scaleX(0.9321);">ALARMS</span>
<div class="b" style="left:1.3px;top:807px;width:1917.4px;height:207.7px;background:#252525;"></div>
<div class="b" style="left:13px;top:811px;width:234px;height:27px;background:#ff0000;"></div>
<span class="t" style="left:18.7px;top:817.0px;font-size:12px;line-height:16px;color:#fff;transform:scaleX(0.9199);">NOT ACKNOWLEDGED INACTIVE ALARMS</span>
<span class="t" style="left:287.5px;top:817.0px;font-size:12px;line-height:16px;color:#0a00ee;transform:scaleX(0.9111);">ACKNOWLEDGED ACTIVE ALARMS</span>
<div class="b" style="left:519px;top:811px;width:222px;height:27px;background:#ff0000;"></div>
<span class="t" style="left:525.0px;top:817.0px;font-size:12px;line-height:16px;color:#1a00e6;transform:scaleX(0.9162);">NOT ACKNOWLEDGED ACTIVE ALARMS</span>
<span class="t" style="left:763.0px;top:818.0px;font-size:12px;line-height:16px;color:#a8a8a8;transform:scaleX(1.0121);">All Alarms</span>
<svg class="b" style="left:941px;top:823px" width="7" height="4"><polygon points="0,0 7,0 3.5,4" fill="#fff"/></svg>
<span class="t" style="left:963.0px;top:818.0px;font-size:12px;line-height:16px;color:#a8a8a8;transform:scaleX(0.9658);">All Severities</span>
<svg class="b" style="left:1141px;top:823px" width="7" height="4"><polygon points="0,0 7,0 3.5,4" fill="#fff"/></svg>
<span class="t" style="left:1163.0px;top:818.0px;font-size:12px;line-height:16px;color:#a8a8a8;transform:scaleX(0.9571);">All Systems</span>
<svg class="b" style="left:1341px;top:823px" width="7" height="4"><polygon points="0,0 7,0 3.5,4" fill="#fff"/></svg>
<span class="t" style="left:1363.0px;top:818.0px;font-size:12px;line-height:16px;color:#a8a8a8;transform:scaleX(0.9711);">All Areas</span>
<svg class="b" style="left:1541px;top:823px" width="7" height="4"><polygon points="0,0 7,0 3.5,4" fill="#fff"/></svg>
<div class="b" style="left:1555px;top:816px;width:18px;height:18px;background:#252525;border:1px solid #d0d0d0;box-sizing:border-box;"></div>
<span class="t" style="left:1579.0px;top:818.0px;font-size:12px;line-height:16px;color:#fff;transform:scaleX(0.9102);">Freeze</span>
<div class="b" style="left:1665px;top:811px;width:130px;height:27px;background:#252525;border:1px solid #d0d0d0;border-radius:3px;box-sizing:border-box;"></div><span class="t" style="left:1678.8px;top:818.8px;font-size:10px;line-height:14px;color:#fff;font-weight:bold;transform:scaleX(0.9374);transform-origin:50% 50%;">ACKNOWLEDGE ALL</span>
<div class="b" style="left:1828px;top:811px;width:75px;height:27px;background:#252525;border:1px solid #d0d0d0;border-radius:3px;box-sizing:border-box;"></div><span class="t" style="left:1844.9px;top:818.8px;font-size:10px;line-height:14px;color:#fff;font-weight:bold;transform:scaleX(0.9240);transform-origin:50% 50%;">EXPORT</span>
<span class="t" style="left:11.0px;top:861.0px;font-size:12px;line-height:16px;color:#fff;font-weight:bold;">ID</span>
<span class="t" style="left:41.0px;top:861.0px;font-size:12px;line-height:16px;color:#fff;font-weight:bold;transform:scaleX(0.8932);">VARIABLE</span>
<span class="t" style="left:131.0px;top:861.0px;font-size:12px;line-height:16px;color:#fff;font-weight:bold;transform:scaleX(0.8917);">SYSTEM</span>
<span class="t" style="left:271.0px;top:861.0px;font-size:12px;line-height:16px;color:#fff;font-weight:bold;transform:scaleX(0.8569);">AREAS</span>
<span class="t" style="left:411.0px;top:861.0px;font-size:12px;line-height:16px;color:#fff;font-weight:bold;transform:scaleX(0.8830);">SUB TYPE</span>
<span class="t" style="left:501.0px;top:861.0px;font-size:12px;line-height:16px;color:#fff;font-weight:bold;transform:scaleX(0.8761);">SEVERITY</span>
<span class="t" style="left:591.0px;top:861.0px;font-size:12px;line-height:16px;color:#fff;font-weight:bold;transform:scaleX(0.9107);">OPERATION ST.</span>
<span class="t" style="left:681.0px;top:861.0px;font-size:12px;line-height:16px;color:#fff;font-weight:bold;transform:scaleX(0.8891);">START DATE</span>
<span class="t" style="left:884.0px;top:861.0px;font-size:12px;line-height:16px;color:#fff;font-weight:bold;transform:scaleX(0.9184);">ACKNOWLEDGED DATE</span>
<span class="t" style="left:1081.0px;top:861.0px;font-size:12px;line-height:16px;color:#fff;font-weight:bold;transform:scaleX(0.9263);">END DATE</span>
<span class="t" style="left:1281.0px;top:861.0px;font-size:12px;line-height:16px;color:#fff;font-weight:bold;transform:scaleX(0.9787);">INFORMATION</span>
<span class="t" style="left:1581.0px;top:861.0px;font-size:12px;line-height:16px;color:#fff;font-weight:bold;transform:scaleX(0.9144);">DESCRIPTION</span>
<div class="b" style="left:37px;top:858px;width:1px;height:19px;background:#d8d8d8;"></div>
<div class="b" style="left:127px;top:858px;width:1px;height:19px;background:#d8d8d8;"></div>
<div class="b" style="left:267px;top:858px;width:1px;height:19px;background:#d8d8d8;"></div>
<div class="b" style="left:407px;top:858px;width:1px;height:19px;background:#d8d8d8;"></div>
<div class="b" style="left:497px;top:858px;width:1px;height:19px;background:#d8d8d8;"></div>
<div class="b" style="left:587px;top:858px;width:1px;height:19px;background:#d8d8d8;"></div>
<div class="b" style="left:677px;top:858px;width:1px;height:19px;background:#d8d8d8;"></div>
<div class="b" style="left:877px;top:858px;width:1px;height:19px;background:#d8d8d8;"></div>
<div class="b" style="left:1077px;top:858px;width:1px;height:19px;background:#d8d8d8;"></div>
<div class="b" style="left:1277px;top:858px;width:1px;height:19px;background:#d8d8d8;"></div>
<div class="b" style="left:1577px;top:858px;width:1px;height:19px;background:#d8d8d8;"></div>
<div class="b" style="left:1877px;top:858px;width:1px;height:19px;background:#d8d8d8;"></div>
<div class="b" style="left:1899px;top:858px;width:1px;height:19px;background:#d8d8d8;"></div>
<div class="b" style="left:5.3px;top:879.4px;width:1895.7px;height:19.5px;background:#ff0000;border:1px solid #e0d0d0;border-radius:2px;box-sizing:border-box;background:linear-gradient(#ff4a4a 0,#ff4a4a 50%,#ff0000 50%,#ff0000 100%);"></div>
<div class="b" style="left:13.700px;top:881px;width:17.500px;height:18px;overflow:hidden;"><span class="t" style="left:0.0px;top:1.0px;font-size:12px;line-height:16px;color:#1a00e6;transform:scaleX(0.9487);">168</span></div>
<div class="b" style="left:43px;top:881px;width:79px;height:18px;overflow:hidden;"><span class="t" style="left:0.0px;top:1.0px;font-size:12px;line-height:16px;color:#1a00e6;transform:scaleX(0.900);">SITE1.CCTV2.CA</span></div>
<span class="t" style="left:133.0px;top:882.0px;font-size:12px;line-height:16px;color:#1a00e6;transform:scaleX(0.9080);">SystemCCTV</span>
<span class="t" style="left:413.0px;top:882.0px;font-size:12px;line-height:16px;color:#1a00e6;transform:scaleX(1.0108);">SubMotion</span>
<span class="t" style="left:503.0px;top:882.0px;font-size:12px;line-height:16px;color:#1a00e6;transform:scaleX(0.9773);">SeverityAlarm</span>
<span class="t" style="left:593.0px;top:882.0px;font-size:12px;line-height:16px;color:#1a00e6;transform:scaleX(0.9744);">OpstatusUnprc</span>
<span class="t" style="left:684.0px;top:882.0px;font-size:12px;line-height:16px;color:#1a00e6;transform:scaleX(0.9846);">10/11/2024 3:41:55 PM</span>
<span class="t" style="left:884.0px;top:882.0px;font-size:12px;line-height:16px;color:#1a00e6;transform:scaleX(0.9846);">10/11/2024 3:41:55 PM</span>
<span class="t" style="left:1084.0px;top:882.0px;font-size:12px;line-height:16px;color:#1a00e6;transform:scaleX(0.9846);">10/11/2024 3:41:55 PM</span>
<span class="t" style="left:1583.5px;top:882.0px;font-size:12px;line-height:16px;color:#1a00e6;transform:scaleX(0.9858);">Exacq VMS: Alarm: Motion Detection</span>
<div class="b" style="left:6px;top:901px;width:1894px;height:17.75px;background:#ff0000;border-radius:1.500px;"></div>
<div class="b" style="left:13.700px;top:902px;width:17.500px;height:18px;overflow:hidden;"><span class="t" style="left:0.0px;top:1.0px;font-size:12px;line-height:16px;color:#1a00e6;transform:scaleX(0.9487);">168</span></div>
<div class="b" style="left:43px;top:902px;width:79px;height:18px;overflow:hidden;"><span class="t" style="left:0.0px;top:1.0px;font-size:12px;line-height:16px;color:#1a00e6;transform:scaleX(0.900);">SITE1.CCTV2.CA</span></div>
<span class="t" style="left:133.0px;top:903.0px;font-size:12px;line-height:16px;color:#1a00e6;transform:scaleX(0.9080);">SystemCCTV</span>
<span class="t" style="left:413.0px;top:903.0px;font-size:12px;line-height:16px;color:#1a00e6;transform:scaleX(1.0108);">SubMotion</span>
<span class="t" style="left:503.0px;top:903.0px;font-size:12px;line-height:16px;color:#1a00e6;transform:scaleX(0.9773);">SeverityAlarm</span>
<span class="t" style="left:593.0px;top:903.0px;font-size:12px;line-height:16px;color:#1a00e6;transform:scaleX(0.9744);">OpstatusUnprc</span>
<span class="t" style="left:684.0px;top:903.0px;font-size:12px;line-height:16px;color:#1a00e6;transform:scaleX(0.9846);">10/11/2024 3:41:52 PM</span>
<span class="t" style="left:884.0px;top:903.0px;font-size:12px;line-height:16px;color:#1a00e6;transform:scaleX(0.9846);">10/11/2024 3:41:52 PM</span>
<span class="t" style="left:1084.0px;top:903.0px;font-size:12px;line-height:16px;color:#1a00e6;transform:scaleX(0.9846);">10/11/2024 3:41:52 PM</span>
<span class="t" style="left:1283.5px;top:903.0px;font-size:12px;line-height:16px;color:#1a00e6;transform:scaleX(0.9880);">Number of Humans: 1</span>
<span class="t" style="left:1583.5px;top:903.0px;font-size:12px;line-height:16px;color:#1a00e6;transform:scaleX(1.0095);">Human Detection: Alarm: Motion Detection</span>
<div class="b" style="left:6px;top:922px;width:1894px;height:17.75px;background:#ff0000;border-radius:1.500px;"></div>
<div class="b" style="left:13.700px;top:923px;width:17.500px;height:18px;overflow:hidden;"><span class="t" style="left:0.0px;top:1.0px;font-size:12px;line-height:16px;color:#1a00e6;transform:scaleX(0.9487);">168</span></div>
<div class="b" style="left:43px;top:923px;width:79px;height:18px;overflow:hidden;"><span class="t" style="left:0.0px;top:1.0px;font-size:12px;line-height:16px;color:#1a00e6;transform:scaleX(0.900);">IFSAS.BORDER</span></div>
<span class="t" style="left:133.0px;top:924.0px;font-size:12px;line-height:16px;color:#1a00e6;transform:scaleX(0.9080);">SystemCCTV</span>
<span class="t" style="left:413.0px;top:924.0px;font-size:12px;line-height:16px;color:#1a00e6;transform:scaleX(1.0108);">SubMotion</span>
<span class="t" style="left:503.0px;top:924.0px;font-size:12px;line-height:16px;color:#1a00e6;transform:scaleX(0.9773);">SeverityAlarm</span>
<span class="t" style="left:593.0px;top:924.0px;font-size:12px;line-height:16px;color:#1a00e6;transform:scaleX(0.9744);">OpstatusUnprc</span>
<span class="t" style="left:684.0px;top:924.0px;font-size:12px;line-height:16px;color:#1a00e6;transform:scaleX(0.9846);">10/11/2024 3:41:52 PM</span>
<span class="t" style="left:884.0px;top:924.0px;font-size:12px;line-height:16px;color:#1a00e6;transform:scaleX(0.9846);">10/11/2024 3:41:52 PM</span>
<span class="t" style="left:1084.0px;top:924.0px;font-size:12px;line-height:16px;color:#1a00e6;transform:scaleX(0.9846);">10/11/2024 3:41:52 PM</span>
<span class="t" style="left:1283.5px;top:924.0px;font-size:12px;line-height:16px;color:#1a00e6;transform:scaleX(0.9292);">Border Name: ifsas Borders , Border Var: IFSAS.BORDEF</span>
<span class="t" style="left:1583.5px;top:924.0px;font-size:12px;line-height:16px;color:#1a00e6;transform:scaleX(1.0095);">Human Detection: Alarm: Motion Detection</span>
<div class="b" style="left:6px;top:943px;width:1894px;height:17.75px;background:#ff0000;border-radius:1.500px;"></div>
<div class="b" style="left:13.700px;top:944px;width:17.500px;height:18px;overflow:hidden;"><span class="t" style="left:0.0px;top:1.0px;font-size:12px;line-height:16px;color:#1a00e6;transform:scaleX(0.9487);">168</span></div>
<div class="b" style="left:43px;top:944px;width:79px;height:18px;overflow:hidden;"><span class="t" style="left:0.0px;top:1.0px;font-size:12px;line-height:16px;color:#1a00e6;transform:scaleX(0.900);">SITE1.CCTV2.CA</span></div>
<span class="t" style="left:133.0px;top:945.0px;font-size:12px;line-height:16px;color:#1a00e6;transform:scaleX(0.9080);">SystemCCTV</span>
<span class="t" style="left:413.0px;top:945.0px;font-size:12px;line-height:16px;color:#1a00e6;transform:scaleX(1.0108);">SubMotion</span>
<span class="t" style="left:503.0px;top:945.0px;font-size:12px;line-height:16px;color:#1a00e6;transform:scaleX(0.9773);">SeverityAlarm</span>
<span class="t" style="left:593.0px;top:945.0px;font-size:12px;line-height:16px;color:#1a00e6;transform:scaleX(0.9744);">OpstatusUnprc</span>
<span class="t" style="left:684.0px;top:945.0px;font-size:12px;line-height:16px;color:#1a00e6;transform:scaleX(0.9846);">10/11/2024 3:41:49 PM</span>
<span class="t" style="left:884.0px;top:945.0px;font-size:12px;line-height:16px;color:#1a00e6;transform:scaleX(0.9846);">10/11/2024 3:41:49 PM</span>
<span class="t" style="left:1084.0px;top:945.0px;font-size:12px;line-height:16px;color:#1a00e6;transform:scaleX(0.9846);">10/11/2024 3:41:49 PM</span>
<span class="t" style="left:1283.5px;top:945.0px;font-size:12px;line-height:16px;color:#1a00e6;transform:scaleX(0.7490);">1</span>
<span class="t" style="left:1583.5px;top:945.0px;font-size:12px;line-height:16px;color:#1a00e6;transform:scaleX(0.9858);">Exacq VMS: Alarm: Motion Detection</span>
<div class="b" style="left:6px;top:964px;width:1894px;height:17.75px;background:#ff0000;border-radius:1.500px;"></div>
<div class="b" style="left:13.700px;top:965px;width:17.500px;height:18px;overflow:hidden;"><span class="t" style="left:0.0px;top:1.0px;font-size:12px;line-height:16px;color:#1a00e6;transform:scaleX(0.9487);">168</span></div>
<div class="b" style="left:43px;top:965px;width:79px;height:18px;overflow:hidden;"><span class="t" style="left:0.0px;top:1.0px;font-size:12px;line-height:16px;color:#1a00e6;transform:scaleX(0.900);">SITE1.CCTV1.CA</span></div>
<span class="t" style="left:133.0px;top:966.0px;font-size:12px;line-height:16px;color:#1a00e6;transform:scaleX(0.9080);">SystemCCTV</span>
<span class="t" style="left:413.0px;top:966.0px;font-size:12px;line-height:16px;color:#1a00e6;transform:scaleX(1.0108);">SubMotion</span>
<span class="t" style="left:503.0px;top:966.0px;font-size:12px;line-height:16px;color:#1a00e6;transform:scaleX(0.9773);">SeverityAlarm</span>
<span class="t" style="left:593.0px;top:966.0px;font-size:12px;line-height:16px;color:#1a00e6;transform:scaleX(0.9744);">OpstatusUnprc</span>
<span class="t" style="left:684.0px;top:966.0px;font-size:12px;line-height:16px;color:#1a00e6;transform:scaleX(0.9846);">10/11/2024 3:41:44 PM</span>
<span class="t" style="left:884.0px;top:966.0px;font-size:12px;line-height:16px;color:#1a00e6;transform:scaleX(0.9846);">10/11/2024 3:41:44 PM</span>
<span class="t" style="left:1084.0px;top:966.0px;font-size:12px;line-height:16px;color:#1a00e6;transform:scaleX(0.9846);">10/11/2024 3:41:44 PM</span>
<span class="t" style="left:1283.5px;top:966.0px;font-size:12px;line-height:16px;color:#1a00e6;transform:scaleX(0.9705);">HikvisionNVR : Hikvision1</span>
<span class="t" style="left:1583.5px;top:966.0px;font-size:12px;line-height:16px;color:#1a00e6;transform:scaleX(1.0262);">Motion detection, &nbsp;alarm channel : 33</span>
<div class="b" style="left:6px;top:985px;width:1894px;height:17.75px;background:#ff0000;border-radius:1.500px;"></div>
<div class="b" style="left:13.700px;top:986px;width:17.500px;height:18px;overflow:hidden;"><span class="t" style="left:0.0px;top:1.0px;font-size:12px;line-height:16px;color:#1a00e6;transform:scaleX(0.9487);">168</span></div>
<div class="b" style="left:43px;top:986px;width:79px;height:18px;overflow:hidden;"><span class="t" style="left:0.0px;top:1.0px;font-size:12px;line-height:16px;color:#1a00e6;transform:scaleX(0.900);">SITE1.CCTV1.CA</span></div>
<span class="t" style="left:133.0px;top:987.0px;font-size:12px;line-height:16px;color:#1a00e6;transform:scaleX(0.9080);">SystemCCTV</span>
<span class="t" style="left:413.0px;top:987.0px;font-size:12px;line-height:16px;color:#1a00e6;transform:scaleX(1.0108);">SubMotion</span>
<span class="t" style="left:503.0px;top:987.0px;font-size:12px;line-height:16px;color:#1a00e6;transform:scaleX(0.9773);">SeverityAlarm</span>
<span class="t" style="left:593.0px;top:987.0px;font-size:12px;line-height:16px;color:#1a00e6;transform:scaleX(0.9744);">OpstatusUnprc</span>
<span class="t" style="left:684.0px;top:987.0px;font-size:12px;line-height:16px;color:#1a00e6;transform:scaleX(0.9846);">10/11/2024 3:41:44 PM</span>
<span class="t" style="left:884.0px;top:987.0px;font-size:12px;line-height:16px;color:#1a00e6;transform:scaleX(0.9846);">10/11/2024 3:41:44 PM</span>
<span class="t" style="left:1084.0px;top:987.0px;font-size:12px;line-height:16px;color:#1a00e6;transform:scaleX(0.9846);">10/11/2024 3:41:44 PM</span>
<span class="t" style="left:1283.5px;top:987.0px;font-size:12px;line-height:16px;color:#1a00e6;transform:scaleX(0.9705);">HikvisionNVR : Hikvision1</span>
<span class="t" style="left:1583.5px;top:987.0px;font-size:12px;line-height:16px;color:#1a00e6;transform:scaleX(1.0262);">Motion detection, &nbsp;alarm channel : 33</span>
<div class="b" style="left:6px;top:1006px;width:1894px;height:5.3px;background:#ff0000;border-radius:1.500px 1.500px 0 0;"></div>
<svg class="b" style="left:1902px;top:864px" width="12" height="6"><polygon points="0,6 6,0 12,6" fill="#a8a8a8"/></svg><div class="b" style="left:1902px;top:874px;width:12px;height:25px;background:#bababa;"></div><svg class="b" style="left:1902px;top:1001px" width="12" height="6"><polygon points="0,0 12,0 6,6" fill="#a8a8a8"/></svg>
<div class="b" style="left:3.2px;top:1019px;width:70.8px;height:18px;background:#2d2d2d;border-left:1px solid #d6d6d6;border-right:1px solid #d6d6d6;box-sizing:border-box;"></div>
<svg class="b" style="left:8.500px;top:1021.500px" width="15" height="13"><path d="M1,0.500 V12 M1,12 H13.500 M1,0.500 H4" stroke="#666" stroke-width="0.800" fill="none"/><path d="M1,0.500 V12 M13.800,9 V12" stroke="#fff" stroke-width="1.300"/><path d="M7,7.500 L13,1.500" stroke="#fff" stroke-width="2"/><path d="M8.500,0.800 H14 V6.300 Z" fill="#fff"/></svg>
<span class="t" style="left:26.9px;top:1021.9px;font-size:11px;line-height:15px;color:#fff;font-weight:bold;transform:scaleX(0.8322);">IFSAS C2</span>
<div class="b" style="left:83px;top:1018px;width:1px;height:19.8px;background:#d0d0d0;"></div>
</body></html>
